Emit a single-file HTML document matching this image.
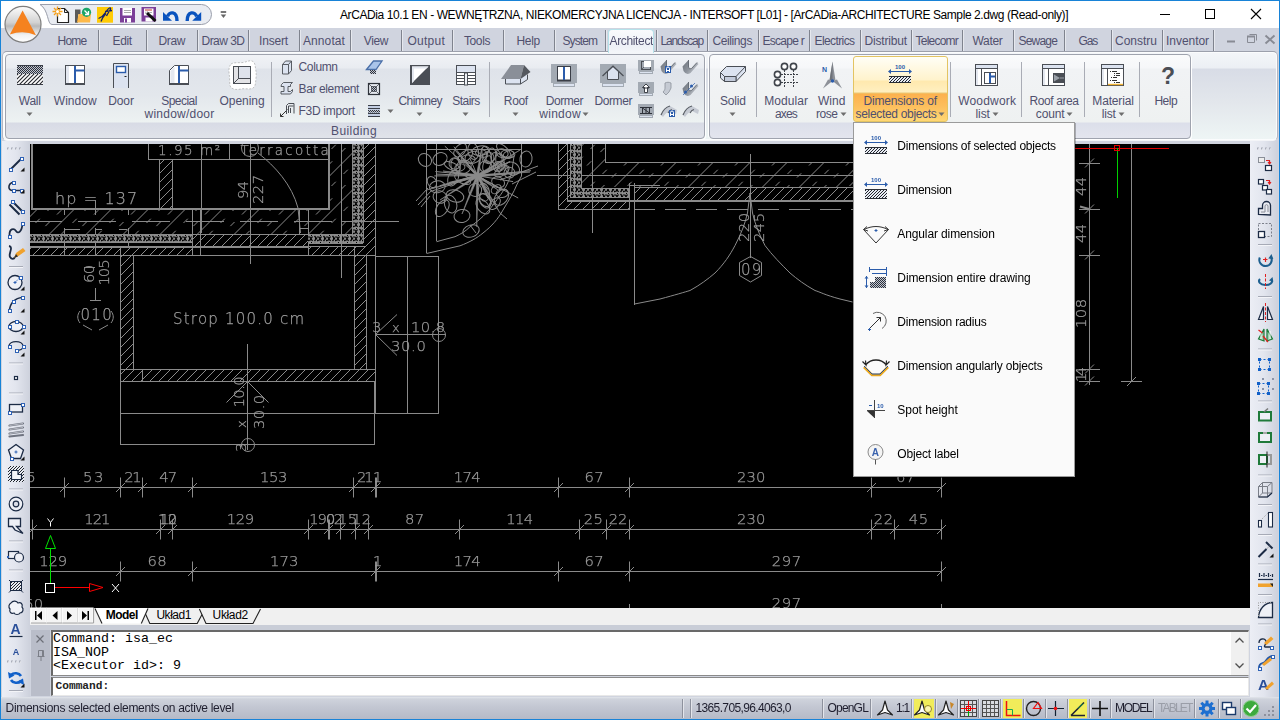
<!DOCTYPE html>
<html lang="en"><head><meta charset="utf-8"><title>ArCADia 10.1 EN</title>
<style>
html,body{margin:0;padding:0}
body{width:1280px;height:720px;overflow:hidden;position:relative;background:#d0d4df;font-family:"Liberation Sans",sans-serif;font-size:12px;color:#000}
.a{position:absolute}
.t{position:absolute;white-space:nowrap;line-height:1.2;font-family:"Liberation Sans",sans-serif}
svg{position:absolute;overflow:visible}
.sep{position:absolute;width:1px;background:#7f838e;box-shadow:1px 0 0 #e6e8ee}
</style></head>
<body>

<div class="a" style="left:0;top:0;width:1280px;height:28px;background:#fff"></div>
<div class="a" style="left:0;top:28px;width:1280px;height:24px;background:#d0d4df"></div>
<div class="a" style="left:0;top:0;width:1280px;height:720px;box-sizing:border-box;border:1px solid #1883d7;z-index:50;pointer-events:none"></div>
<svg style="left:0;top:0" width="240" height="52" viewBox="0 0 240 52"><defs><linearGradient id="ab" x1="0" y1="0" x2="0" y2="1"><stop offset="0" stop-color="#fdfdfd"/><stop offset=".45" stop-color="#d2d2d2"/><stop offset=".55" stop-color="#b9b9b9"/><stop offset=".8" stop-color="#f2f2f2"/><stop offset="1" stop-color="#ffffff"/></linearGradient></defs><path d="M40 4.500H201.500a10 10 0 0 1 0 20H52C47 24.500 49 10 40 4.500Z" fill="#e9ecf2" stroke="#9a9eab" stroke-width="1"/><circle cx="23" cy="24.300" r="18" fill="url(#ab)" stroke="#7d7d7d" stroke-width="1.200"/><path d="M22.600 10.500L36 35.200Q23 29.500 9.800 34.600Z" fill="#f5821f"/><path d="M57.500 8.500h7l4 4v10h-11z" fill="#fff" stroke="#222" stroke-width="1.200"/><path d="M64.500 8.500v4h4" fill="none" stroke="#222" stroke-width="1"/><g stroke="#f7a11a" stroke-width="1.300"><path d="M57.500 6.500v10M52.500 11.500h10M54 8l7 7M61 8l-7 7"/></g><circle cx="57.500" cy="11.500" r="1.500" fill="#fff"/><path d="M75 22.700v-13.200h5.500v5h-2.500v8.200z" fill="#5a5a5a"/><path d="M77 22.500l1.500-8.500h12.500l-1 8.500z" fill="#fdb94a"/><circle cx="86.500" cy="12.300" r="4.600" fill="#19a567"/><path d="M84.500 10.500l4 4M88.500 11v3.500h-3.500" stroke="#fff" stroke-width="1.300" fill="none"/><rect x="97" y="7" width="16" height="15.700" fill="#ffcb05"/><path d="M98.500 18.500c3-1 5-3 7-6s4-5 5-4.500s-2 4-4 8M101 21.500c1-3 3-6 5-8M105 11.500l7-1" fill="none" stroke="#15226b" stroke-width="1.300"/><path d="M120 8h15v14.500h-15z" fill="#7b3f98"/><rect x="122.500" y="8" width="9.500" height="7.500" fill="#fff"/><path d="M124 10.500h7M124 12.500h7" stroke="#aaa" stroke-width="1"/><rect x="124" y="18" width="7" height="4.500" fill="#fff"/><rect x="125" y="18.500" width="2" height="4" fill="#7b3f98"/><path d="M141.500 7h14.500v14.500h-14.500z" fill="#7b3f98"/><rect x="144" y="8.500" width="9.500" height="7" fill="#fff"/><path d="M145 10h7" stroke="#c0392b" stroke-width="1"/><path d="M145 12.500h7" stroke="#aaa" stroke-width="1"/><rect x="145.500" y="17.500" width="7" height="4" fill="#fff"/><path d="M146.500 12.500l9 8.500" stroke="#111" stroke-width="3"/><path d="M145 11l3 1l-2 2z" fill="#ddd"/><path d="M167.500 16.500C169 11.500 177 10.500 177 21" fill="none" stroke="#0a53be" stroke-width="3.400"/><path d="M163 12v8.800h9z" fill="#0a53be"/><path d="M196.700 16.500C195.200 11.500 187.200 10.500 187.200 21" fill="none" stroke="#0a53be" stroke-width="3.400"/><path d="M201.200 12v8.800h-9z" fill="#0a53be"/><path d="M220.700 12h5.500" stroke="#777" stroke-width="2"/><path d="M220.700 14.500h5.500l-2.750 3.500z" fill="#666"/></svg>
<span class="t" style="left:340.00px;top:8.00px;font-size:12px;letter-spacing:-0.410px;color:#000;">ArCADia 10.1 EN - WEWNĘTRZNA, NIEKOMERCYJNA LICENCJA - INTERSOFT [L01] - [ArCADia-ARCHITECTURE Sample 2.dwg (Read-only)]</span>
<svg style="left:1150px;top:0" width="130" height="28" viewBox="0 0 130 28"><g stroke="#000" stroke-width="1" fill="none" shape-rendering="crispEdges"><path d="M10 14.5H20"/><rect x="55.5" y="9.5" width="9" height="9"/></g><path d="M101 9L111 19M111 9L101 19" stroke="#000" stroke-width="1.1" fill="none"/></svg>
<div class="sep" style="left:98px;top:30px;height:21px"></div>
<div class="sep" style="left:146px;top:30px;height:21px"></div>
<div class="sep" style="left:197px;top:30px;height:21px"></div>
<div class="sep" style="left:248px;top:30px;height:21px"></div>
<div class="sep" style="left:299px;top:30px;height:21px"></div>
<div class="sep" style="left:350px;top:30px;height:21px"></div>
<div class="sep" style="left:401px;top:30px;height:21px"></div>
<div class="sep" style="left:452px;top:30px;height:21px"></div>
<div class="sep" style="left:503px;top:30px;height:21px"></div>
<div class="sep" style="left:554px;top:30px;height:21px"></div>
<div class="sep" style="left:605px;top:30px;height:21px"></div>
<div class="sep" style="left:656px;top:30px;height:21px"></div>
<div class="sep" style="left:707px;top:30px;height:21px"></div>
<div class="sep" style="left:758px;top:30px;height:21px"></div>
<div class="sep" style="left:809px;top:30px;height:21px"></div>
<div class="sep" style="left:860px;top:30px;height:21px"></div>
<div class="sep" style="left:911px;top:30px;height:21px"></div>
<div class="sep" style="left:962px;top:30px;height:21px"></div>
<div class="sep" style="left:1013px;top:30px;height:21px"></div>
<div class="sep" style="left:1064px;top:30px;height:21px"></div>
<div class="sep" style="left:1111px;top:30px;height:21px"></div>
<div class="sep" style="left:1162px;top:30px;height:21px"></div>
<div class="sep" style="left:1213px;top:30px;height:21px"></div>
<div class="a" style="left:608px;top:29px;width:46px;height:24px;background:linear-gradient(#f9fafd,#edf0f6 70%,#f4f6f9);border:1px solid #b5e2ea;border-bottom:none;border-radius:4px 4px 0 0;box-sizing:border-box;overflow:hidden;z-index:5"><span class="t" style="left:0.500px;top:3.900px;color:#50506e;font-size:12px;letter-spacing:-0.35px">Architect</span></div>
<span class="t" style="left:57.50px;top:33.50px;font-size:12px;letter-spacing:-0.752px;color:#50506e;">Home</span>
<span class="t" style="left:112.50px;top:33.50px;font-size:12px;letter-spacing:-0.357px;color:#50506e;">Edit</span>
<span class="t" style="left:158.50px;top:33.50px;font-size:12px;letter-spacing:-0.375px;color:#50506e;">Draw</span>
<span class="t" style="left:201.50px;top:33.50px;font-size:12px;letter-spacing:-0.525px;color:#50506e;">Draw 3D</span>
<span class="t" style="left:259.00px;top:33.50px;font-size:12px;letter-spacing:-0.168px;color:#50506e;">Insert</span>
<span class="t" style="left:303.00px;top:33.50px;font-size:12px;letter-spacing:0.091px;color:#50506e;">Annotat</span>
<span class="t" style="left:363.75px;top:33.50px;font-size:12px;letter-spacing:-0.386px;color:#50506e;">View</span>
<span class="t" style="left:407.50px;top:33.50px;font-size:12px;letter-spacing:0.247px;color:#50506e;">Output</span>
<span class="t" style="left:464.00px;top:33.50px;font-size:12px;letter-spacing:-0.402px;color:#50506e;">Tools</span>
<span class="t" style="left:516.50px;top:33.50px;font-size:12px;letter-spacing:-0.295px;color:#50506e;">Help</span>
<span class="t" style="left:562.50px;top:33.50px;font-size:12px;letter-spacing:-0.918px;color:#50506e;">System</span>
<span class="t" style="left:660.50px;top:33.50px;font-size:12px;letter-spacing:-1.192px;color:#50506e;">Landscap</span>
<span class="t" style="left:712.50px;top:33.50px;font-size:12px;letter-spacing:-0.398px;color:#50506e;">Ceilings</span>
<span class="t" style="left:762.50px;top:33.50px;font-size:12px;letter-spacing:-0.732px;color:#50506e;">Escape r</span>
<span class="t" style="left:814.50px;top:33.50px;font-size:12px;letter-spacing:-0.593px;color:#50506e;">Electrics</span>
<span class="t" style="left:864.50px;top:33.50px;font-size:12px;letter-spacing:-0.168px;color:#50506e;">Distribut</span>
<span class="t" style="left:915.50px;top:33.50px;font-size:12px;letter-spacing:-0.772px;color:#50506e;">Telecomr</span>
<span class="t" style="left:972.50px;top:33.50px;font-size:12px;letter-spacing:-0.312px;color:#50506e;">Water</span>
<span class="t" style="left:1018.50px;top:33.50px;font-size:12px;letter-spacing:-0.811px;color:#50506e;">Sewage</span>
<span class="t" style="left:1078.50px;top:33.50px;font-size:12px;letter-spacing:-1.169px;color:#50506e;">Gas</span>
<span class="t" style="left:1115.00px;top:33.50px;font-size:12px;letter-spacing:-0.002px;color:#50506e;">Constru</span>
<span class="t" style="left:1166.00px;top:33.50px;font-size:12px;letter-spacing:-0.044px;color:#50506e;">Inventor</span>
<svg style="left:1220px;top:30px" width="58" height="20" viewBox="0 0 58 20"><g fill="none" stroke="#888b94"><path d="M7 11.5H15" stroke-width="2"/><path d="M27.500 6.500h7v6h-7zM29.500 4.500h7v6" stroke-width="1"/><path d="M27 6.500h8" stroke-width="2"/><path d="M45.500 5.500L54.500 13.500M54.500 5.500L45.500 13.500" stroke-width="2"/></g></svg>
<div class="a" style="left:2px;top:51px;width:1276px;height:90px;box-sizing:border-box;border:1px solid #b4b8c3;border-top-color:#9ca0ac;border-bottom-color:#f4f5f8;background:linear-gradient(#f4f6f9 0,#eceff4 16px,#d8dce6 17px,#e3e7ec 51px,#eef5f5 87px);border-radius:5px;box-shadow:inset 0 0 0 1px #fbfcfd"></div>
<div class="a" style="left:5px;top:54px;width:700px;height:85px;box-sizing:border-box;border:1px solid #9fa3ae;border-radius:4px;background:linear-gradient(#f0f2f6 0,#e9ecf1 13px,#dfe3ea 14px,#e3e7ec 40px,#edf2f2 67px,#d8dbe5 68px,#e0e3ea 83px);box-shadow:1px 1px 0 #fff,-1px 0 0 #fff"></div>
<div class="a" style="left:709px;top:54px;width:482px;height:85px;box-sizing:border-box;border:1px solid #9fa3ae;border-radius:4px;background:linear-gradient(#fafbfc 0,#f6f7f9 13px,#f1f3f5 14px,#f0f2f3 40px,#eef1f1 67px,#dcdfea 68px,#e3e5ee 83px);box-shadow:1px 1px 0 #fff,-1px 0 0 #fff"></div>
<div class="a" style="left:853px;top:56px;width:95px;height:66px;box-sizing:border-box;border:1px solid #e3c462;border-radius:3px;background:linear-gradient(#fffef6 0,#fff3cc 23px,#ffe9ae 24px,#ffefc0 35px,#e9c978 36px,#fcb14e 37px,#fdc05e 50px,#ffd774 64px)"></div>
<div class="a" style="left:271px;top:62px;width:1px;height:55px;background:#a9acb5"></div>
<div class="a" style="left:489px;top:62px;width:1px;height:55px;background:#a9acb5"></div>
<div class="a" style="left:756px;top:62px;width:1px;height:55px;background:#a9acb5"></div>
<div class="a" style="left:950px;top:62px;width:1px;height:55px;background:#a9acb5"></div>
<div class="a" style="left:1021px;top:62px;width:1px;height:55px;background:#a9acb5"></div>
<div class="a" style="left:1084px;top:62px;width:1px;height:55px;background:#a9acb5"></div>
<div class="a" style="left:1139px;top:62px;width:1px;height:55px;background:#a9acb5"></div>
<span class="t" style="left:18.75px;top:93.60px;font-size:12px;letter-spacing:-0.222px;color:#50506e;">Wall</span>
<span class="t" style="left:53.75px;top:93.60px;font-size:12px;letter-spacing:0.054px;color:#50506e;">Window</span>
<span class="t" style="left:108.25px;top:93.60px;font-size:12px;letter-spacing:-0.127px;color:#50506e;">Door</span>
<span class="t" style="left:161.25px;top:93.60px;font-size:12px;letter-spacing:-0.551px;color:#50506e;">Special</span>
<span class="t" style="left:144.50px;top:106.60px;font-size:12px;letter-spacing:0.239px;color:#50506e;">window/door</span>
<span class="t" style="left:219.50px;top:93.60px;font-size:12px;letter-spacing:-0.052px;color:#50506e;">Opening</span>
<span class="t" style="left:298.60px;top:59.60px;font-size:12px;letter-spacing:-0.391px;color:#50506e;">Column</span>
<span class="t" style="left:298.60px;top:81.60px;font-size:12px;letter-spacing:-0.390px;color:#50506e;">Bar element</span>
<span class="t" style="left:298.60px;top:103.60px;font-size:12px;letter-spacing:-0.314px;color:#50506e;">F3D import</span>
<span class="t" style="left:398.40px;top:93.60px;font-size:12px;letter-spacing:-0.535px;color:#50506e;">Chimney</span>
<span class="t" style="left:452.30px;top:93.60px;font-size:12px;letter-spacing:-0.546px;color:#50506e;">Stairs</span>
<span class="t" style="left:503.80px;top:93.60px;font-size:12px;letter-spacing:-0.337px;color:#50506e;">Roof</span>
<span class="t" style="left:545.80px;top:93.60px;font-size:12px;letter-spacing:-0.467px;color:#50506e;">Dormer</span>
<span class="t" style="left:539.30px;top:106.60px;font-size:12px;letter-spacing:0.264px;color:#50506e;">window</span>
<span class="t" style="left:594.50px;top:93.60px;font-size:12px;letter-spacing:-0.417px;color:#50506e;">Dormer</span>
<span class="t" style="left:720.00px;top:93.60px;font-size:12px;letter-spacing:-0.177px;color:#50506e;">Solid</span>
<span class="t" style="left:764.20px;top:93.60px;font-size:12px;letter-spacing:0.064px;color:#50506e;">Modular</span>
<span class="t" style="left:775.00px;top:106.60px;font-size:12px;letter-spacing:-0.887px;color:#50506e;">axes</span>
<span class="t" style="left:818.00px;top:93.60px;font-size:12px;letter-spacing:0.040px;color:#50506e;">Wind</span>
<span class="t" style="left:816.00px;top:106.60px;font-size:12px;letter-spacing:-0.460px;color:#50506e;">rose</span>
<span class="t" style="left:863.60px;top:93.60px;font-size:12px;letter-spacing:-0.218px;color:#50506e;">Dimensions of</span>
<span class="t" style="left:855.60px;top:106.60px;font-size:12px;letter-spacing:-0.322px;color:#50506e;">selected objects</span>
<span class="t" style="left:958.20px;top:93.60px;font-size:12px;letter-spacing:0.192px;color:#50506e;">Woodwork</span>
<span class="t" style="left:975.50px;top:106.60px;font-size:12px;letter-spacing:-0.092px;color:#50506e;">list</span>
<span class="t" style="left:1029.50px;top:93.60px;font-size:12px;letter-spacing:-0.399px;color:#50506e;">Roof area</span>
<span class="t" style="left:1035.80px;top:106.60px;font-size:12px;letter-spacing:-0.111px;color:#50506e;">count</span>
<span class="t" style="left:1092.30px;top:93.60px;font-size:12px;letter-spacing:-0.160px;color:#50506e;">Material</span>
<span class="t" style="left:1101.70px;top:106.60px;font-size:12px;letter-spacing:-0.167px;color:#50506e;">list</span>
<span class="t" style="left:1154.40px;top:93.60px;font-size:12px;letter-spacing:-0.445px;color:#50506e;">Help</span>
<span class="t" style="left:331.00px;top:123.60px;font-size:12px;letter-spacing:0.413px;color:#50506e;">Building</span>
<svg style="left:0;top:0" width="1280" height="145" viewBox="0 0 1280 145">
<defs>
<pattern id="chk" width="2" height="2" patternUnits="userSpaceOnUse"><rect width="2" height="2" fill="#bfc4cf"/><rect width="1" height="1" fill="#2e323c"/><rect x="1" y="1" width="1" height="1" fill="#2e323c"/></pattern>
<pattern id="hat" width="4" height="4" patternUnits="userSpaceOnUse"><rect width="4" height="4" fill="#fff"/><path d="M-1 5L5 -1M-1 1L1 -1M3 5L5 3" stroke="#23262c" stroke-width="1.1"/></pattern>
<pattern id="hat3" width="3" height="3" patternUnits="userSpaceOnUse"><rect width="3" height="3" fill="#e8ecf4"/><path d="M-1 4L4 -1M-1 1L1 -1M2 4L4 2" stroke="#23262c" stroke-width="1"/></pattern>
<linearGradient id="gut" x1="0" y1="0" x2="1" y2="0.6"><stop offset="0" stop-color="#6b717a"/><stop offset=".55" stop-color="#8d939c"/><stop offset="1" stop-color="#c3c7ce"/></linearGradient>
</defs>
<rect x="17" y="65" width="26" height="9" fill="url(#chk)"/><rect x="17" y="74" width="26" height="11" fill="url(#hat)"/><path d="M17 65.500h26M17 84.500h26" stroke="#3a3e47" stroke-width="1"/>
<path d="M26.5 112.5h6l-3 3.5z" fill="#6e6e6e"/>
<rect x="65.500" y="65.500" width="19" height="19" fill="#fff" stroke="#4a4e55"/><rect x="66" y="66" width="3" height="17" fill="#e4e8f0"/><path d="M65 84h20" stroke="#4a4e55" stroke-width="2"/><path d="M75 66v17M75 70.500h9.500" stroke="#2b5cab" stroke-width="2" fill="none"/>
<path d="M113.500 88V63.500h15V88" fill="#dce3f0" stroke="#4a4e55"/><rect x="116.500" y="66.500" width="9" height="6" fill="#fff" stroke="#2b5cab" stroke-width="1.4"/><path d="M124.500 76.500h2" stroke="#222" stroke-width="1"/>
<path d="M169.500 84.500V70.500L174.500 65.500H188.500V84.500Z" fill="#fff" stroke="#4a4e55"/><path d="M170.500 83V71l4-4.500v16.500z" fill="#e4e8f0"/><path d="M169 84h20" stroke="#4a4e55" stroke-width="2"/><path d="M179 66v17M179 70.500h9.500" stroke="#2b5cab" stroke-width="2" fill="none"/>
<path d="M231 64c3-2 8-1 12-1.500c4-.5 6-2.500 9-1.500s3 4 3.500 7s1 6 .5 10s0 8-3 10s-8 0-12 1s-8 .5-10-1.500s-1-7-1.500-11s-1.500-9 1.500-12.500z" fill="#fff" stroke="#aaa" stroke-width=".7" stroke-dasharray="2 1.500"/><rect x="233.500" y="66.500" width="17" height="17" fill="#e3e3e6" stroke="#4a4e55"/><rect x="238.500" y="66.500" width="12" height="12" fill="#dfe3ec" stroke="#4a4e55"/><path d="M233.500 83.500l5-5" stroke="#4a4e55"/>
<path d="M282.500 64.500l3-3.500h6v9.500l-3 3.500h-6z" fill="#dce3f0" stroke="#4a4e55" stroke-width=".9"/><path d="M282.500 64.500h6v9.500M288.500 64.500l3-3.500" fill="none" stroke="#4a4e55" stroke-width=".9"/>
<path d="M281.500 84.500l2-2h9l-2 2v2h-2.500v5h2.500l2-2v2l-2 2.500h-9.500v-2.500h3v-5h-3z" fill="#dce3f0" stroke="#4a4e55" stroke-width=".9"/>
<path d="M280.500 116.500l7-7M280.500 116.500v-3M280.500 116.500h3" stroke="#333" stroke-width="1" fill="none"/><path d="M286.500 114v-8.500l2-2h5.500v10M288.500 113v-7h5M290.500 113v-5" stroke="#4a4e55" stroke-width="1" fill="none"/>
<path d="M366.500 69.500l7-8.500h8.500l-6 8.500z" fill="#a9c4ea" stroke="#4a6fa8" stroke-width="1.300"/><rect x="370" y="70" width="6" height="4" fill="url(#chk)"/>
<rect x="368.500" y="83.500" width="11" height="11" fill="#e6e9f0" stroke="#2e323a" stroke-width="1.200"/><rect x="371.500" y="86.500" width="5" height="5" fill="url(#chk)" stroke="#2e323a" stroke-width=".6"/><path d="M368.500 83.500l3 3M379.500 83.500l-3 3M368.500 94.500l3-3M379.500 94.500l-3-3" stroke="#2e323a" stroke-width=".7"/>
<rect x="368" y="105" width="12" height="12" fill="#c3cee2"/><path d="M368 105.500h12M368 108.500h12M368 113.500h12M368 116.500h12" stroke="#3a3e47" stroke-width="1"/><rect x="368" y="110" width="12" height="2.500" fill="url(#chk)"/>
<path d="M387.5 109.5h6l-3 3.5z" fill="#6e6e6e"/>
<rect x="410.500" y="65.500" width="19" height="19" fill="#4a4e55" stroke="#4a4e55"/><path d="M412 66.500h16.500L412 83z" fill="#fff"/><path d="M412 66.500v16.500l2-2v-12.500h12.500l2-2z" fill="#e4e8f0"/>
<path d="M416.5 112.5h6l-3 3.5z" fill="#6e6e6e"/>
<rect x="456.500" y="65.500" width="19" height="19" fill="#fff" stroke="#4a4e55"/><rect x="457" y="66" width="18" height="6" fill="#dce3f0"/><path d="M456.500 72.500h19M457 75.500h18M457 78.500h18M457 81.500h18" stroke="#4a4e55" stroke-width="1"/><rect x="464.500" y="73" width="3" height="12" fill="#eef1f6" stroke="#4a4e55" stroke-width="1"/>
<path d="M462.5 112.5h6l-3 3.5z" fill="#6e6e6e"/>
<path d="M505.500 79v5h15l7-4.500v-5" fill="#dce3f0" stroke="#4a4e55" stroke-width="1"/><path d="M501 79l10-14h13l-3.500 14z" fill="#8a8f98"/><path d="M524 65l6.500 7l-10 7z" fill="#54585f"/><path d="M520.500 79v5" stroke="#4a4e55"/>
<path d="M512.5 112.5h6l-3 3.5z" fill="#6e6e6e"/>
<rect x="551" y="64" width="26" height="19" fill="#a3aab3"/><rect x="553.500" y="83.500" width="21" height="3" fill="#dce3f0" stroke="#a3aab3"/><rect x="557.500" y="66.500" width="13" height="14" fill="#fff" stroke="#3a3e47" stroke-width="1"/><path d="M557 80.500h14" stroke="#3a3e47" stroke-width="2"/><path d="M564 67v13" stroke="#2b5cab" stroke-width="2"/>
<path d="M582.5 112.5h6l-3 3.5z" fill="#6e6e6e"/>
<rect x="600" y="64" width="26" height="19" fill="#a3aab3"/><rect x="602.500" y="83.500" width="21" height="3" fill="#dce3f0" stroke="#a3aab3"/><path d="M607.500 79.500v-8l5.500-5l5.500 5v8z" fill="#dce3f0" stroke="#4a4e55"/><path d="M602.500 76l10.500-10l10.500 10" fill="none" stroke="#4a4e55" stroke-width="1.200"/>
<rect x="638" y="60" width="16" height="11" fill="#a3aab3"/><rect x="639.500" y="71.500" width="13" height="2" fill="#dce3f0" stroke="#a3aab3"/>
<rect x="638" y="82" width="16" height="11" fill="#a3aab3"/><rect x="639.500" y="93.500" width="13" height="2" fill="#dce3f0" stroke="#a3aab3"/>
<rect x="638" y="104" width="16" height="11" fill="#a3aab3"/><rect x="639.500" y="115.500" width="13" height="2" fill="#dce3f0" stroke="#a3aab3"/>
<rect x="641.500" y="61.500" width="9" height="8" fill="none" stroke="#4a4e55"/><rect x="644" y="61" width="7" height="6" fill="#fff"/><path d="M641.500 69.500l2.500-2.500" stroke="#4a4e55" stroke-width=".8"/>
<path d="M644.500 92.500v-5h-2l3.500-3.500l3.500 3.500h-2v5z" fill="#fff" stroke="#2e323a" stroke-width=".9"/><path d="M643 88h6" stroke="#2e323a"/>
<path d="M640 107.500h12M640 113.500h12M642.500 107.500v6M649.500 107.500v6M642.500 108l7 5M646 108v5" stroke="#2e323a" stroke-width="1" fill="none"/>
<path d="M660.5 66.5L666.5 60V67Q667 70 669.5 68.5L675 62.5L676.5 64L668.5 73Q664 75.5 661.5 71Z" fill="url(#gut)"/><path d="M666.5 60V67Q667 70 669.5 68.5L675 62.5" fill="none" stroke="#5f656e" stroke-width=".9"/>
<rect x="665" y="66" width="6" height="7" fill="#2b5cab"/><path d="M666.5 72v-3.500a1.500 1.500 0 0 1 3 0v3.500M666.5 70.5h3" stroke="#fff" stroke-width="1" fill="none"/>
<path d="M682.5 66.5L688.5 60V67Q689 70 691.5 68.5L697 62.5L698.5 64L690.5 73Q686 75.5 683.5 71Z" fill="url(#gut)"/><path d="M688.5 60V67Q689 70 691.5 68.5L697 62.5" fill="none" stroke="#5f656e" stroke-width=".9"/>
<path d="M682.5 88.5L688.5 82V89Q689 92 691.5 90.5L697 84.5L698.5 86L690.5 95Q686 97.5 683.5 93Z" fill="url(#gut)"/><path d="M688.5 82V89Q689 92 691.5 90.5L697 84.5" fill="none" stroke="#5f656e" stroke-width=".9"/>
<path d="M683 95l12-12" stroke="#2b5cab" stroke-width=".7"/><circle cx="685.500" cy="92" r="1.500" fill="#2b5cab"/><circle cx="691.500" cy="86" r="1.500" fill="#2b5cab"/>
<path d="M665 83c2-1 4-1 6 0v5l-2 4l-3 3l-3-3c2-2 2-3 2-5z" fill="#c5cad3" stroke="#8a9099" stroke-width=".8"/>
<path d="M661 115c2-5 5-8 9-9l7 4l-1 4l-6-3c-3 1-5 3-7 6z" fill="#c5cad3"/><path d="M661 115c2-5 5-8 9-9M668 113c1-2 2-3 4-3.500" fill="none" stroke="#555a62" stroke-width="1.200"/>
<rect x="669" y="110" width="6" height="7" fill="#2b5cab"/><path d="M670.5 116v-3.500a1.500 1.500 0 0 1 3 0v3.500M670.5 114.5h3" stroke="#fff" stroke-width="1" fill="none"/>
<path d="M683 115c2-5 5-8 9-9l7 4l-1 4l-6-3c-3 1-5 3-7 6z" fill="#c5cad3"/><path d="M683 115c2-5 5-8 9-9M690 113c1-2 2-3 4-3.500" fill="none" stroke="#555a62" stroke-width="1.200"/>
<path d="M720.500 72.500l6-6h19v5l-9 9.500h-12.500l-3.500-3z" fill="#dce3f0" stroke="#4a4e55" stroke-width="1"/><path d="M720.500 72.500l4 4h11.500l9.500-10M724.500 76.500v5M736 76.500v5" fill="none" stroke="#4a4e55" stroke-width="1"/><path d="M724.500 76.500h11.500v5h-11.500z" fill="#c3cbdb" stroke="#4a4e55"/>
<path d="M729.5 112.5h6l-3 3.5z" fill="#6e6e6e"/>
<g fill="#fff" stroke="#3f434a" stroke-width="1.600"><path d="M781 74.500h18M781 82.500h18M784.500 70v17M793.500 70v17" stroke-dasharray="2 1" stroke-width="1" fill="none"/><circle cx="784.500" cy="66.500" r="3.100"/><circle cx="793.500" cy="66.500" r="3.100"/><circle cx="777.500" cy="74.500" r="3.100"/><circle cx="777.500" cy="82.500" r="3.100"/></g>
<path d="M832.500 61.500l3 19h-6z" fill="#8d9198"/><path d="M832.500 61.500v19h-3z" fill="#6f737a"/><path d="M832.500 81l-9.500 7.500l5-9z" fill="#8d9198"/><path d="M832.500 81l9.500 7.500l-5-9z" fill="#8d9198"/><circle cx="832.500" cy="81" r="1.700" fill="#2b5cab"/>
<text x="822" y="71.500" font-family="Liberation Sans,sans-serif" font-size="7" font-weight="bold" fill="#2b5cab">N</text>
<path d="M840.5 112.5h6l-3 3.5z" fill="#6e6e6e"/>
<g><path d="M889 71.5h22" stroke="#2b5cab" stroke-width="1"/><path d="M888 71.5l3-2.500v5zM912 71.5l-3-2.500v5z" fill="#2b5cab"/><text x="895" y="69" font-family="Liberation Sans,sans-serif" font-size="6" font-weight="bold" fill="#2b5cab">100</text><rect x="889" y="76" width="22" height="6" fill="url(#hat3)"/><path d="M889 76.5h22M889 82.5h22" stroke="#2a2e36" stroke-width="1"/></g>
<path d="M938.5 112.5h6l-3 3.5z" fill="#6e6e6e"/>
<rect x="975.500" y="64.500" width="22" height="21" fill="#fff" stroke="#4a4e55"/><rect x="976" y="65" width="21" height="3" fill="#dce3f0"/><path d="M975 68.500h23M981.500 69v16" stroke="#4a4e55" stroke-width="1" fill="none"/><rect x="976" y="69" width="2" height="16" fill="#e4e8f0"/>
<rect x="984.500" y="72.500" width="11" height="11" fill="#fff" stroke="#4a4e55"/><path d="M990 73v10M990 76.500h5" stroke="#2b5cab" stroke-width="2" fill="none"/>
<path d="M992.5 112.5h6l-3 3.5z" fill="#6e6e6e"/>
<rect x="1042.500" y="64.500" width="22" height="21" fill="#fff" stroke="#4a4e55"/><rect x="1043" y="65" width="21" height="3" fill="#dce3f0"/><path d="M1042 68.500h23M1048.500 69v16" stroke="#4a4e55" stroke-width="1" fill="none"/><rect x="1043" y="69" width="2" height="16" fill="#e4e8f0"/>
<rect x="1053" y="73" width="11" height="10" fill="#4a4e55"/><path d="M1054 74.500v7l6-3.500z" fill="#9aa0a8"/><path d="M1060 78h4" stroke="#9aa0a8"/>
<path d="M1066.5 112.5h6l-3 3.5z" fill="#6e6e6e"/>
<rect x="1101.500" y="64.500" width="22" height="21" fill="#fff" stroke="#4a4e55"/><rect x="1102" y="65" width="21" height="3" fill="#dce3f0"/><path d="M1101 68.500h23M1107.500 69v16" stroke="#4a4e55" stroke-width="1" fill="none"/><rect x="1102" y="69" width="2" height="16" fill="#e4e8f0"/>
<path d="M1110 71.500h1M1112 71.500h5M1114 73.500h1M1116 73.500h4M1114 75.500h1M1116 75.500h4M1111 77.500h1M1113 77.500h4M1110 80.500h1M1112 80.500h5M1114 82.500h1M1116 82.500h4" stroke="#333" stroke-width="1"/><path d="M1108 84.500h15" stroke="#f1b434" stroke-width="1.400"/>
<path d="M1118.5 112.5h6l-3 3.5z" fill="#6e6e6e"/>
<text x="1161" y="83.500" font-family="Liberation Sans,sans-serif" font-size="23" font-weight="bold" fill="#4b4e55">?</text>
</svg>
<div class="a" style="left:30px;top:144px;width:1220px;height:464px;background:#000"></div>
<svg style="left:0;top:0;will-change:transform" width="1280" height="720" viewBox="0 0 1280 720" font-family="DejaVu Sans, sans-serif" font-weight="200">
<defs><clipPath id="dc"><rect x="30" y="144" width="1220" height="464"/></clipPath>
<pattern id="h9" width="9" height="9" patternUnits="userSpaceOnUse"><path d="M-1 10L10 -1M-1 1L1 -1M8 10L10 8" stroke="#8a8a8a" stroke-width="1"/></pattern>
<pattern id="h7" width="7" height="7" patternUnits="userSpaceOnUse"><path d="M-1 8L8 -1M-1 1L1 -1M6 8L8 6" stroke="#8a8a8a" stroke-width="1"/></pattern>
<pattern id="h26" width="37" height="37" patternUnits="userSpaceOnUse" patternTransform="translate(24.500 0)"><path d="M-1 38L38 -1" stroke="#8a8a8a" stroke-width="1"/><path d="M-1 13L13 -1M11 38L38 11" stroke="#8a8a8a" stroke-width="1" stroke-dasharray="6 11"/><path d="M-1 26L26 -1M24 38L38 24" stroke="#8a8a8a" stroke-width="1" stroke-dasharray="6 13" stroke-dashoffset="7"/></pattern>
<pattern id="ins" width="9" height="7" patternUnits="userSpaceOnUse" patternTransform="translate(30 235)"><rect width="9" height="7" fill="#8e8e8e"/><path d="M.500 1.500L3.500 6M3.500 1.500L.500 6M5.500 1L7.500 3.500L5.500 6M8.500 1.500v1M8 5.500h1" stroke="#000" stroke-width="1.300" fill="none"/><rect x="2" y="0" width="1" height="1" fill="#000"/><rect x="6" y="3" width="1" height="1" fill="#000"/></pattern>
</defs>
<g clip-path="url(#dc)" fill="none">
<rect x="31" y="144" width="2" height="65" fill="#8a8a8a"/>
<rect x="31" y="208" width="299" height="2" fill="#8a8a8a"/>
<rect x="328" y="144" width="2" height="65" fill="#8a8a8a"/>
<rect x="148" y="144" width="1" height="16" fill="#8a8a8a"/>
<rect x="201" y="144" width="1" height="89" fill="#8a8a8a"/>
<rect x="229" y="144" width="1" height="16" fill="#8a8a8a"/>
<rect x="148" y="159" width="181" height="1" fill="#8a8a8a"/>
<text x="158" y="155" font-size="13.5" textLength="62.2" lengthAdjust="spacing" fill="#9c9c9c" stroke="#9c9c9c" stroke-width=".25" text-anchor="start">1.95 m²</text>
<text x="240.5" y="155" font-size="13.5" textLength="88.2" lengthAdjust="spacing" fill="#9c9c9c" stroke="#9c9c9c" stroke-width=".25" text-anchor="start">Terracotta</text>
<circle cx="250" cy="148" r="8.500" stroke="#8a8a8a"/>
<text x="55" y="203.5" font-size="16" textLength="82.2" lengthAdjust="spacing" fill="#9c9c9c" stroke="#9c9c9c" stroke-width=".25" text-anchor="start">hp = 137</text>
<rect x="95" y="200" width="1" height="12" fill="#8a8a8a"/>
<rect x="159" y="160" width="14" height="48" fill="url(#h9)"/>
<rect x="159" y="160" width="1" height="48" fill="#8a8a8a"/>
<rect x="172" y="160" width="1" height="48" fill="#8a8a8a"/>
<rect x="250" y="144" width="1" height="120" fill="#8a8a8a"/>
<text x="248" y="199" font-size="14.8" textLength="18.2" lengthAdjust="spacing" transform="rotate(-90 248 199)" fill="#9c9c9c" stroke="#9c9c9c" stroke-width=".25" text-anchor="start">94</text>
<text x="263" y="204" font-size="14.8" textLength="29.2" lengthAdjust="spacing" transform="rotate(-90 263 204)" fill="#9c9c9c" stroke="#9c9c9c" stroke-width=".25" text-anchor="start">227</text>
<path d="M258 153C275 166 292 185 298 208L300.500 233" stroke="#8a8a8a" stroke-width="1" />
<rect x="30" y="210" width="300" height="24" fill="url(#h26)"/>
<path d="M30 221.500H342" stroke="#8a8a8a" stroke-width="1" stroke-dasharray="38 16" stroke-dashoffset="6"/>
<path d="M64 229.500H80M95 229.500H102M119 229.500H127" stroke="#8a8a8a" stroke-width="1" />
<rect x="30" y="234" width="163" height="1" fill="#8a8a8a"/>
<rect x="30" y="235" width="163" height="7" fill="url(#ins)"/>
<rect x="30" y="242" width="163" height="1" fill="#8a8a8a"/>
<rect x="30" y="246" width="278" height="2" fill="#8a8a8a"/>
<rect x="30" y="247" width="163" height="8" fill="url(#h9)"/>
<rect x="30" y="255" width="346" height="1" fill="#8a8a8a"/>
<rect x="193" y="235" width="115" height="11" fill="url(#h9)"/>
<rect x="193" y="234" width="115" height="1" fill="#8a8a8a"/>
<rect x="192" y="209" width="1" height="47" fill="#8a8a8a"/>
<rect x="200" y="209" width="1" height="47" fill="#8a8a8a"/>
<rect x="64" y="209" width="1" height="6" fill="#8a8a8a"/>
<rect x="64" y="228" width="1" height="6" fill="#8a8a8a"/>
<rect x="64" y="243" width="1" height="4" fill="#8a8a8a"/>
<rect x="95" y="209" width="1" height="6" fill="#8a8a8a"/>
<rect x="95" y="228" width="1" height="6" fill="#8a8a8a"/>
<rect x="95" y="243" width="1" height="4" fill="#8a8a8a"/>
<rect x="128" y="209" width="1" height="6" fill="#8a8a8a"/>
<rect x="128" y="228" width="1" height="6" fill="#8a8a8a"/>
<rect x="128" y="243" width="1" height="4" fill="#8a8a8a"/>
<rect x="64" y="247" width="1" height="9" fill="#8a8a8a"/>
<rect x="95" y="247" width="1" height="9" fill="#8a8a8a"/>
<rect x="299" y="209" width="1" height="26" fill="#8a8a8a"/>
<rect x="308" y="209" width="1" height="47" fill="#8a8a8a"/>
<rect x="299" y="228" width="9" height="1" fill="#8a8a8a"/>
<rect x="308" y="235" width="55" height="8" fill="url(#ins)"/>
<rect x="308" y="234" width="46" height="1" fill="#8a8a8a"/>
<rect x="308" y="243" width="55" height="1" fill="#8a8a8a"/>
<rect x="308" y="247" width="58" height="8" fill="url(#h9)"/>
<rect x="308" y="246" width="58" height="1" fill="#8a8a8a"/>
<rect x="330" y="144" width="23" height="90" fill="url(#h26)"/>
<rect x="353" y="144" width="10" height="92" fill="url(#ins)"/>
<rect x="352" y="144" width="1" height="91" fill="#8a8a8a"/>
<rect x="363" y="144" width="1" height="99" fill="#8a8a8a"/>
<rect x="364" y="144" width="11" height="111" fill="url(#h9)"/>
<rect x="375" y="144" width="1" height="112" fill="#8a8a8a"/>
<rect x="341" y="144" width="1" height="134" fill="#8a8a8a"/>
<rect x="354" y="256" width="12" height="126" fill="url(#h9)"/>
<rect x="354" y="247" width="1" height="123" fill="#8a8a8a"/>
<rect x="366" y="256" width="1" height="114" fill="#8a8a8a"/>
<rect x="342" y="221" width="57" height="1" fill="#8a8a8a"/>
<rect x="120" y="256" width="13" height="114" fill="url(#h9)"/>
<rect x="120" y="247" width="1" height="198" fill="#8a8a8a"/>
<rect x="133" y="256" width="1" height="114" fill="#8a8a8a"/>
<rect x="120" y="370" width="255" height="11" fill="url(#h9)"/>
<rect x="120" y="369" width="255" height="1" fill="#8a8a8a"/>
<rect x="120" y="381" width="255" height="1" fill="#8a8a8a"/>
<rect x="142" y="370" width="1" height="11" fill="#8a8a8a"/>
<rect x="120" y="413" width="319" height="1" fill="#8a8a8a"/>
<rect x="120" y="444" width="255" height="1" fill="#8a8a8a"/>
<rect x="374" y="381" width="1" height="64" fill="#8a8a8a"/>
<rect x="375" y="256" width="1" height="158" fill="#8a8a8a"/>
<rect x="407" y="256" width="1" height="158" fill="#8a8a8a"/>
<rect x="438" y="256" width="1" height="158" fill="#8a8a8a"/>
<rect x="375" y="256" width="64" height="1" fill="#8a8a8a"/>
<text x="173" y="324.3" font-size="15" textLength="131.2" lengthAdjust="spacing" fill="#9c9c9c" stroke="#9c9c9c" stroke-width=".25" text-anchor="start">Strop 100.0 cm</text>
<rect x="247" y="344" width="1" height="106" fill="#8a8a8a"/>
<path d="M226.500 402.500L247.500 381.500L268.500 402.500" stroke="#8a8a8a" stroke-width="1" />
<circle cx="248" cy="445" r="6.500" stroke="#8a8a8a"/>
<text x="243.5" y="407.5" font-size="14.8" textLength="31.2" lengthAdjust="spacing" transform="rotate(-90 243.5 407.5)" fill="#9c9c9c" stroke="#9c9c9c" stroke-width=".25" text-anchor="start">10.0</text>
<text x="263.5" y="429" font-size="14.8" textLength="34.2" lengthAdjust="spacing" transform="rotate(-90 263.5 429)" fill="#9c9c9c" stroke="#9c9c9c" stroke-width=".25" text-anchor="start">30.0</text>
<text x="246" y="428" font-size="13" transform="rotate(-90 246 428)" fill="#9c9c9c" stroke="#9c9c9c" stroke-width=".25" text-anchor="start">x</text>
<text x="246" y="452" font-size="14.8" transform="rotate(-90 246 452)" fill="#9c9c9c" stroke="#9c9c9c" stroke-width=".25" text-anchor="start">3</text>
<text x="93.5" y="283" font-size="14.8" textLength="18.2" lengthAdjust="spacing" transform="rotate(-90 93.5 283)" fill="#9c9c9c" stroke="#9c9c9c" stroke-width=".25" text-anchor="start">60</text>
<text x="109" y="285.5" font-size="14.8" textLength="26.2" lengthAdjust="spacing" transform="rotate(-90 109 285.5)" fill="#9c9c9c" stroke="#9c9c9c" stroke-width=".25" text-anchor="start">105</text>
<rect x="95" y="288" width="1" height="13" fill="#8a8a8a"/>
<rect x="90" y="300" width="11" height="1" fill="#8a8a8a"/>
<rect x="84" y="267" width="11" height="1" fill="#8a8a8a"/>
<text x="80.5" y="320" font-size="15" textLength="31.2" lengthAdjust="spacing" fill="#9c9c9c" stroke="#9c9c9c" stroke-width=".25" text-anchor="start">010</text>
<path d="M80 311C77 315 77 319 80 323M111 311C114 315 114 319 111 323M83 325L92 330M108 325L99 330" stroke="#8a8a8a" stroke-width="1" />
<text x="372" y="331.6" font-size="14.8" fill="#9c9c9c" stroke="#9c9c9c" stroke-width=".25" text-anchor="start">3</text>
<text x="392" y="331.6" font-size="13" fill="#9c9c9c" stroke="#9c9c9c" stroke-width=".25" text-anchor="start">x</text>
<text x="411" y="331.6" font-size="14.8" textLength="34.2" lengthAdjust="spacing" fill="#9c9c9c" stroke="#9c9c9c" stroke-width=".25" text-anchor="start">10.8</text>
<text x="391" y="350.8" font-size="14.8" textLength="34.9" lengthAdjust="spacing" fill="#9c9c9c" stroke="#9c9c9c" stroke-width=".25" text-anchor="start">30.0</text>
<rect x="375" y="334" width="71" height="1" fill="#8a8a8a"/>
<path d="M397 314.500L375.500 334.500L397 355.500" stroke="#8a8a8a" stroke-width="1" />
<circle cx="439" cy="335" r="6.500" stroke="#8a8a8a"/>
<rect x="426" y="144" width="1" height="109" fill="#8a8a8a"/>
<rect x="436" y="144" width="1" height="97" fill="#8a8a8a"/>
<path d="M426.500 253.500L460 245.800C470 242 477 238 483 233C492 226 498 219 503 210C509 200 514 192 516.700 185L521.500 176" stroke="#8a8a8a" stroke-width="1" />
<path d="M436.500 241.700L455 236.700C461 234 466 231 470 226.700C480 220 487 213 493 205C499 197 503 192 506.700 185C509 180 511 176 511.700 173L514 156" stroke="#8a8a8a" stroke-width="1" />
<rect x="426" y="149" width="96" height="1" fill="#8a8a8a"/>
<rect x="521" y="144" width="1" height="32" fill="#8a8a8a"/>
<path d="M478.7 176.0L481.7 148.0L476.3 175.6Z" fill="#8a8a8a" stroke="#8a8a8a" stroke-width=".6"/><path d="M477.7 174.6L443.0 171.0L477.3 177.0Z" fill="#8a8a8a" stroke="#8a8a8a" stroke-width=".6"/><path d="M478.0 176.9L510.0 161.7L477.0 174.7Z" fill="#8a8a8a" stroke="#8a8a8a" stroke-width=".6"/><path d="M476.5 176.4L500.0 213.0L478.5 175.2Z" fill="#8a8a8a" stroke="#8a8a8a" stroke-width=".6"/><path d="M476.3 175.8L476.7 226.7L478.7 175.8Z" fill="#8a8a8a" stroke="#8a8a8a" stroke-width=".6"/><path d="M477.2 174.6L426.7 190.0L477.8 177.0Z" fill="#8a8a8a" stroke="#8a8a8a" stroke-width=".6"/><path d="M478.4 175.0L455.0 150.0L476.6 176.6Z" fill="#8a8a8a" stroke="#8a8a8a" stroke-width=".6"/><path d="M478.1 176.8L520.0 150.0L476.9 174.8Z" fill="#8a8a8a" stroke="#8a8a8a" stroke-width=".6"/><path d="M476.8 174.8L440.0 200.0L478.2 176.8Z" fill="#8a8a8a" stroke="#8a8a8a" stroke-width=".6"/><path d="M476.4 175.3L462.0 214.0L478.6 176.3Z" fill="#8a8a8a" stroke="#8a8a8a" stroke-width=".6"/><path d="M477.6 177.0L530.0 172.0L477.4 174.6Z" fill="#8a8a8a" stroke="#8a8a8a" stroke-width=".6"/><path d="M476.8 176.8L498.0 190.0L478.2 174.8Z" fill="#8a8a8a" stroke="#8a8a8a" stroke-width=".6"/><path d="M477.5 175.8L439.7 185.7 M477.5 175.8L509.8 161.7 M477.5 175.8L437.0 174.1 M477.5 175.8L492.6 205.4 M477.5 175.8L444.8 146.2 M477.5 175.8L502.9 190.3 M477.5 175.8L518.2 198.0 M477.5 175.8L470.0 158.7 M477.5 175.8L530.9 170.7 M477.5 175.8L453.9 146.7 M477.5 175.8L488.8 190.4 M477.5 175.8L455.8 172.5 M477.5 175.8L487.9 198.3 M477.5 175.8L513.1 181.6 M477.5 175.8L431.4 191.2 M477.5 175.8L435.4 171.5 M477.5 175.8L434.3 175.9 M477.5 175.8L448.8 182.5" stroke="#8a8a8a" stroke-width="1" /><path d="M416 201L428 188M418 205L432 190M421 207L430 196M538 166L500 180M536 172L512 184M500 213L507 219M470 225L476 233" stroke="#8a8a8a" stroke-width="1" /><ellipse cx="502.2" cy="153.2" rx="6.0" ry="4.4" transform="rotate(13 502.2 153.2)" stroke="#8a8a8a" stroke-width="1"/><ellipse cx="480.8" cy="150.6" rx="8.8" ry="4.7" transform="rotate(172 480.8 150.6)" stroke="#8a8a8a" stroke-width="1"/><ellipse cx="485.7" cy="166.6" rx="5.9" ry="6.2" transform="rotate(85 485.7 166.6)" stroke="#8a8a8a" stroke-width="1"/><ellipse cx="509.4" cy="172.7" rx="5.3" ry="5.4" transform="rotate(140 509.4 172.7)" stroke="#8a8a8a" stroke-width="1"/><ellipse cx="475.2" cy="190.0" rx="6.5" ry="6.4" transform="rotate(136 475.2 190.0)" stroke="#8a8a8a" stroke-width="1"/><ellipse cx="496.2" cy="189.2" rx="5.5" ry="3.7" transform="rotate(143 496.2 189.2)" stroke="#8a8a8a" stroke-width="1"/><ellipse cx="494.8" cy="203.6" rx="7.0" ry="4.1" transform="rotate(132 494.8 203.6)" stroke="#8a8a8a" stroke-width="1"/><ellipse cx="502.2" cy="193.2" rx="6.0" ry="4.3" transform="rotate(175 502.2 193.2)" stroke="#8a8a8a" stroke-width="1"/><ellipse cx="486.7" cy="155.1" rx="9.0" ry="4.1" transform="rotate(71 486.7 155.1)" stroke="#8a8a8a" stroke-width="1"/><ellipse cx="503.8" cy="151.0" rx="9.5" ry="4.1" transform="rotate(46 503.8 151.0)" stroke="#8a8a8a" stroke-width="1"/><ellipse cx="481.6" cy="153.3" rx="6.3" ry="3.7" transform="rotate(16 481.6 153.3)" stroke="#8a8a8a" stroke-width="1"/><ellipse cx="455.6" cy="166.0" rx="7.7" ry="4.6" transform="rotate(82 455.6 166.0)" stroke="#8a8a8a" stroke-width="1"/><ellipse cx="512.3" cy="168.6" rx="7.6" ry="6.1" transform="rotate(33 512.3 168.6)" stroke="#8a8a8a" stroke-width="1"/><ellipse cx="488.0" cy="157.6" rx="5.9" ry="5.7" transform="rotate(169 488.0 157.6)" stroke="#8a8a8a" stroke-width="1"/><ellipse cx="508.0" cy="153.9" rx="6.9" ry="3.8" transform="rotate(7 508.0 153.9)" stroke="#8a8a8a" stroke-width="1"/><ellipse cx="501.8" cy="171.2" rx="8.2" ry="4.3" transform="rotate(148 501.8 171.2)" stroke="#8a8a8a" stroke-width="1"/><ellipse cx="454.9" cy="163.5" rx="5.8" ry="5.7" transform="rotate(12 454.9 163.5)" stroke="#8a8a8a" stroke-width="1"/><ellipse cx="482.8" cy="206.4" rx="8.8" ry="5.3" transform="rotate(50 482.8 206.4)" stroke="#8a8a8a" stroke-width="1"/><ellipse cx="497.8" cy="166.7" rx="5.1" ry="4.3" transform="rotate(80 497.8 166.7)" stroke="#8a8a8a" stroke-width="1"/><ellipse cx="498.1" cy="182.3" rx="6.7" ry="5.2" transform="rotate(24 498.1 182.3)" stroke="#8a8a8a" stroke-width="1"/><ellipse cx="442.3" cy="208.2" rx="9.4" ry="5.5" transform="rotate(124 442.3 208.2)" stroke="#8a8a8a" stroke-width="1"/><ellipse cx="459.8" cy="167.6" rx="5.2" ry="3.6" transform="rotate(164 459.8 167.6)" stroke="#8a8a8a" stroke-width="1"/><ellipse cx="460.1" cy="150.2" rx="7.9" ry="4.9" transform="rotate(131 460.1 150.2)" stroke="#8a8a8a" stroke-width="1"/><ellipse cx="473.0" cy="157.4" rx="8.2" ry="5.9" transform="rotate(165 473.0 157.4)" stroke="#8a8a8a" stroke-width="1"/><ellipse cx="450.6" cy="204.1" rx="9.1" ry="6.1" transform="rotate(75 450.6 204.1)" stroke="#8a8a8a" stroke-width="1"/><ellipse cx="490.9" cy="155.7" rx="7.8" ry="4.6" transform="rotate(105 490.9 155.7)" stroke="#8a8a8a" stroke-width="1"/><ellipse cx="463.6" cy="166.9" rx="7.9" ry="6.5" transform="rotate(158 463.6 166.9)" stroke="#8a8a8a" stroke-width="1"/><ellipse cx="473.2" cy="151.2" rx="8.3" ry="5.2" transform="rotate(79 473.2 151.2)" stroke="#8a8a8a" stroke-width="1"/><ellipse cx="487.0" cy="163.8" rx="8.4" ry="3.6" transform="rotate(108 487.0 163.8)" stroke="#8a8a8a" stroke-width="1"/><ellipse cx="453.1" cy="178.1" rx="8.1" ry="5.0" transform="rotate(111 453.1 178.1)" stroke="#8a8a8a" stroke-width="1"/><ellipse cx="500.1" cy="166.1" rx="5.1" ry="4.4" transform="rotate(122 500.1 166.1)" stroke="#8a8a8a" stroke-width="1"/><ellipse cx="483.9" cy="192.2" rx="9.1" ry="5.5" transform="rotate(80 483.9 192.2)" stroke="#8a8a8a" stroke-width="1"/><ellipse cx="500.0" cy="161.5" rx="8.0" ry="4.1" transform="rotate(78 500.0 161.5)" stroke="#8a8a8a" stroke-width="1"/><ellipse cx="496.6" cy="158.8" rx="6.7" ry="5.2" transform="rotate(57 496.6 158.8)" stroke="#8a8a8a" stroke-width="1"/><ellipse cx="501.5" cy="197.4" rx="8.8" ry="6.0" transform="rotate(128 501.5 197.4)" stroke="#8a8a8a" stroke-width="1"/><ellipse cx="502.9" cy="169.3" rx="5.8" ry="4.9" transform="rotate(50 502.9 169.3)" stroke="#8a8a8a" stroke-width="1"/><ellipse cx="484.9" cy="200.9" rx="7.8" ry="5.0" transform="rotate(57 484.9 200.9)" stroke="#8a8a8a" stroke-width="1"/><ellipse cx="508.5" cy="154.5" rx="5.3" ry="3.6" transform="rotate(157 508.5 154.5)" stroke="#8a8a8a" stroke-width="1"/><ellipse cx="452.1" cy="166.3" rx="8.6" ry="3.6" transform="rotate(24 452.1 166.3)" stroke="#8a8a8a" stroke-width="1"/><ellipse cx="462.7" cy="179.2" rx="8.7" ry="4.2" transform="rotate(25 462.7 179.2)" stroke="#8a8a8a" stroke-width="1"/><ellipse cx="437.3" cy="186.8" rx="7.9" ry="5.9" transform="rotate(173 437.3 186.8)" stroke="#8a8a8a" stroke-width="1"/><ellipse cx="468.2" cy="159.1" rx="7.1" ry="4.0" transform="rotate(2 468.2 159.1)" stroke="#8a8a8a" stroke-width="1"/><ellipse cx="431.9" cy="182.1" rx="5.8" ry="4.3" transform="rotate(62 431.9 182.1)" stroke="#8a8a8a" stroke-width="1"/><ellipse cx="465.3" cy="156.1" rx="8.4" ry="4.7" transform="rotate(143 465.3 156.1)" stroke="#8a8a8a" stroke-width="1"/><ellipse cx="462" cy="216" rx="8" ry="6.5" transform="rotate(-10 462 216)" stroke="#8a8a8a" stroke-width="1"/><ellipse cx="471" cy="231" rx="8.5" ry="6" transform="rotate(-20 471 231)" stroke="#8a8a8a" stroke-width="1"/><ellipse cx="440" cy="197" rx="7" ry="6" transform="rotate(20 440 197)" stroke="#8a8a8a" stroke-width="1"/><ellipse cx="425" cy="160" rx="7" ry="6" transform="rotate(40 425 160)" stroke="#8a8a8a" stroke-width="1"/><ellipse cx="440" cy="159" rx="7.5" ry="6" transform="rotate(-30 440 159)" stroke="#8a8a8a" stroke-width="1"/><ellipse cx="526" cy="159" rx="6" ry="8" transform="rotate(10 526 159)" stroke="#8a8a8a" stroke-width="1"/><ellipse cx="455" cy="196" rx="9" ry="6" transform="rotate(15 455 196)" stroke="#8a8a8a" stroke-width="1"/><ellipse cx="485" cy="200" rx="7" ry="5" transform="rotate(60 485 200)" stroke="#8a8a8a" stroke-width="1"/>
<rect x="537" y="175" width="317" height="1" fill="#8a8a8a"/>
<rect x="558" y="144" width="13" height="66" fill="url(#h9)"/>
<rect x="558" y="144" width="1" height="66" fill="#8a8a8a"/>
<rect x="567" y="144" width="1" height="57" fill="#8a8a8a"/>
<rect x="571" y="144" width="10" height="53" fill="url(#ins)"/>
<rect x="570" y="144" width="1" height="53" fill="#8a8a8a"/>
<rect x="581" y="144" width="1" height="45" fill="#8a8a8a"/>
<rect x="581" y="189" width="48" height="8" fill="url(#ins)"/>
<rect x="581" y="188" width="49" height="1" fill="#8a8a8a"/>
<rect x="570" y="197" width="60" height="1" fill="#8a8a8a"/>
<rect x="558" y="201" width="72" height="8" fill="url(#h9)"/>
<rect x="567" y="200" width="503" height="2" fill="#8a8a8a"/>
<rect x="558" y="209" width="72" height="1" fill="#8a8a8a"/>
<rect x="592" y="144" width="1" height="89" fill="#8a8a8a"/>
<rect x="605" y="144" width="1" height="19" fill="#8a8a8a"/>
<rect x="629" y="183" width="1" height="27" fill="#8a8a8a"/>
<rect x="581" y="144" width="24" height="44" fill="url(#h26)"/>
<rect x="605" y="162" width="465" height="1" fill="#8a8a8a"/>
<rect x="634" y="187" width="436" height="1" fill="#8a8a8a"/>
<rect x="630" y="185" width="30" height="1" fill="#8a8a8a"/>
<rect x="605" y="163" width="465" height="24" fill="url(#h26)"/>
<rect x="634" y="188" width="436" height="12" fill="url(#h9)"/>
<rect x="634" y="183" width="1" height="122" fill="#8a8a8a"/>
<path d="M634 209.500H1070" stroke="#8a8a8a" stroke-width="1" stroke-dasharray="21 10"/>
<rect x="750" y="154" width="1" height="104" fill="#8a8a8a"/>
<path d="M634.500 304L660 299C675 295 685 292 690 290.500C700 285 708 279 715 273C724 264 730 255 735 245.500C741 234 745 224 747.500 213L750 193" stroke="#8a8a8a" stroke-width="1" />
<path d="M852.500 302L840 299C825 295 820 292 815 290.500C805 285 797 279 790 273C781 264 772 255 765 245.500C759 234 755 224 752.500 213L750 193" stroke="#8a8a8a" stroke-width="1" />
<path d="M750.500 256.500L761.500 262.500V275.500L750.500 282L739.500 275.500V262.500Z" stroke="#8a8a8a" stroke-width="1" />
<text x="741" y="274.5" font-size="15" textLength="20.2" lengthAdjust="spacing" fill="#9c9c9c" stroke="#9c9c9c" stroke-width=".25" text-anchor="start">09</text>
<text x="748.5" y="242" font-size="14.8" textLength="29.2" lengthAdjust="spacing" transform="rotate(-90 748.5 242)" fill="#9c9c9c" stroke="#9c9c9c" stroke-width=".25" text-anchor="start">220</text>
<text x="763.5" y="242" font-size="14.8" textLength="29.2" lengthAdjust="spacing" transform="rotate(-90 763.5 242)" fill="#9c9c9c" stroke="#9c9c9c" stroke-width=".25" text-anchor="start">245</text>
<rect x="30" y="487" width="912" height="1" fill="#8a8a8a"/>
<rect x="64" y="477.5" width="1" height="20.0" fill="#8a8a8a"/><path d="M60 492.0L69 483.0" stroke="#8a8a8a" stroke-width="1"/>
<rect x="120" y="477.5" width="1" height="20.0" fill="#8a8a8a"/><path d="M116 492.0L125 483.0" stroke="#8a8a8a" stroke-width="1"/>
<rect x="142" y="477.5" width="1" height="20.0" fill="#8a8a8a"/><path d="M138 492.0L147 483.0" stroke="#8a8a8a" stroke-width="1"/>
<rect x="192" y="477.5" width="1" height="20.0" fill="#8a8a8a"/><path d="M188 492.0L197 483.0" stroke="#8a8a8a" stroke-width="1"/>
<rect x="353" y="477.5" width="1" height="20.0" fill="#8a8a8a"/><path d="M349 492.0L358 483.0" stroke="#8a8a8a" stroke-width="1"/>
<rect x="558" y="477.5" width="1" height="20.0" fill="#8a8a8a"/><path d="M554 492.0L563 483.0" stroke="#8a8a8a" stroke-width="1"/>
<rect x="629" y="477.5" width="1" height="20.0" fill="#8a8a8a"/><path d="M625 492.0L634 483.0" stroke="#8a8a8a" stroke-width="1"/>
<rect x="871" y="477.5" width="1" height="20.0" fill="#8a8a8a"/><path d="M867 492.0L876 483.0" stroke="#8a8a8a" stroke-width="1"/>
<rect x="941" y="477.5" width="1" height="20.0" fill="#8a8a8a"/><path d="M937 492.0L946 483.0" stroke="#8a8a8a" stroke-width="1"/>
<rect x="375" y="477.5" width="2" height="20.0" fill="#8a8a8a"/><path d="M371 492.0L380 483.0" stroke="#8a8a8a" stroke-width="1"/>
<text x="83" y="482" font-size="14.8" textLength="20.5" lengthAdjust="spacing" fill="#9c9c9c" stroke="#9c9c9c" stroke-width=".25" text-anchor="start">53</text>
<text x="124.3" y="482" font-size="14.8" textLength="17.4" lengthAdjust="spacing" fill="#9c9c9c" stroke="#9c9c9c" stroke-width=".25" text-anchor="start">21</text>
<text x="159.3" y="482" font-size="14.8" textLength="17.9" lengthAdjust="spacing" fill="#9c9c9c" stroke="#9c9c9c" stroke-width=".25" text-anchor="start">47</text>
<text x="260" y="482" font-size="14.8" textLength="27.5" lengthAdjust="spacing" fill="#9c9c9c" stroke="#9c9c9c" stroke-width=".25" text-anchor="start">153</text>
<text x="357" y="482" font-size="14.8" textLength="16.7" lengthAdjust="spacing" fill="#9c9c9c" stroke="#9c9c9c" stroke-width=".25" text-anchor="start">21</text>
<text x="453.8" y="482" font-size="14.8" textLength="26.9" lengthAdjust="spacing" fill="#9c9c9c" stroke="#9c9c9c" stroke-width=".25" text-anchor="start">174</text>
<text x="584.5" y="482" font-size="14.8" textLength="19.2" lengthAdjust="spacing" fill="#9c9c9c" stroke="#9c9c9c" stroke-width=".25" text-anchor="start">67</text>
<text x="737" y="482" font-size="14.8" textLength="28.5" lengthAdjust="spacing" fill="#9c9c9c" stroke="#9c9c9c" stroke-width=".25" text-anchor="start">230</text>
<text x="896" y="482" font-size="14.8" textLength="19.2" lengthAdjust="spacing" fill="#9c9c9c" stroke="#9c9c9c" stroke-width=".25" text-anchor="start">67</text>
<text x="26" y="482" font-size="14.8" fill="#9c9c9c" stroke="#9c9c9c" stroke-width=".25" text-anchor="start">6</text>
<text x="373" y="482" font-size="14.8" fill="#9c9c9c" stroke="#9c9c9c" stroke-width=".25" text-anchor="start">1</text>
<rect x="30" y="529" width="912" height="1" fill="#8a8a8a"/>
<rect x="32" y="519.5" width="1" height="20.0" fill="#8a8a8a"/><path d="M28 534.0L37 525.0" stroke="#8a8a8a" stroke-width="1"/>
<rect x="160" y="519.5" width="1" height="20.0" fill="#8a8a8a"/><path d="M156 534.0L165 525.0" stroke="#8a8a8a" stroke-width="1"/>
<rect x="172" y="519.5" width="1" height="20.0" fill="#8a8a8a"/><path d="M168 534.0L177 525.0" stroke="#8a8a8a" stroke-width="1"/>
<rect x="308" y="519.5" width="1" height="20.0" fill="#8a8a8a"/><path d="M304 534.0L313 525.0" stroke="#8a8a8a" stroke-width="1"/>
<rect x="340" y="519.5" width="1" height="20.0" fill="#8a8a8a"/><path d="M336 534.0L345 525.0" stroke="#8a8a8a" stroke-width="1"/>
<rect x="355" y="519.5" width="1" height="20.0" fill="#8a8a8a"/><path d="M351 534.0L360 525.0" stroke="#8a8a8a" stroke-width="1"/>
<rect x="368" y="519.5" width="1" height="20.0" fill="#8a8a8a"/><path d="M364 534.0L373 525.0" stroke="#8a8a8a" stroke-width="1"/>
<rect x="459" y="519.5" width="1" height="20.0" fill="#8a8a8a"/><path d="M455 534.0L464 525.0" stroke="#8a8a8a" stroke-width="1"/>
<rect x="579" y="519.5" width="1" height="20.0" fill="#8a8a8a"/><path d="M575 534.0L584 525.0" stroke="#8a8a8a" stroke-width="1"/>
<rect x="606" y="519.5" width="1" height="20.0" fill="#8a8a8a"/><path d="M602 534.0L611 525.0" stroke="#8a8a8a" stroke-width="1"/>
<rect x="629" y="519.5" width="1" height="20.0" fill="#8a8a8a"/><path d="M625 534.0L634 525.0" stroke="#8a8a8a" stroke-width="1"/>
<rect x="871" y="519.5" width="1" height="20.0" fill="#8a8a8a"/><path d="M867 534.0L876 525.0" stroke="#8a8a8a" stroke-width="1"/>
<rect x="894" y="519.5" width="1" height="20.0" fill="#8a8a8a"/><path d="M890 534.0L899 525.0" stroke="#8a8a8a" stroke-width="1"/>
<rect x="941" y="519.5" width="1" height="20.0" fill="#8a8a8a"/><path d="M937 534.0L946 525.0" stroke="#8a8a8a" stroke-width="1"/>
<rect x="328" y="519.5" width="2" height="20.0" fill="#8a8a8a"/><path d="M324 534.0L333 525.0" stroke="#8a8a8a" stroke-width="1"/>
<text x="84.3" y="524" font-size="14.8" textLength="26.2" lengthAdjust="spacing" fill="#9c9c9c" stroke="#9c9c9c" stroke-width=".25" text-anchor="start">121</text>
<text x="158" y="524" font-size="14.8" textLength="19.2" lengthAdjust="spacing" fill="#9c9c9c" stroke="#9c9c9c" stroke-width=".25" text-anchor="start">12</text>
<text x="226.8" y="524" font-size="14.8" textLength="27.4" lengthAdjust="spacing" fill="#9c9c9c" stroke="#9c9c9c" stroke-width=".25" text-anchor="start">129</text>
<text x="309.3" y="524" font-size="14.8" textLength="25.9" lengthAdjust="spacing" fill="#9c9c9c" stroke="#9c9c9c" stroke-width=".25" text-anchor="start">190</text>
<text x="338" y="524" font-size="14.8" textLength="19.2" lengthAdjust="spacing" fill="#9c9c9c" stroke="#9c9c9c" stroke-width=".25" text-anchor="start">15</text>
<text x="352" y="524" font-size="14.8" textLength="19.2" lengthAdjust="spacing" fill="#9c9c9c" stroke="#9c9c9c" stroke-width=".25" text-anchor="start">12</text>
<text x="405" y="524" font-size="14.8" textLength="19.2" lengthAdjust="spacing" fill="#9c9c9c" stroke="#9c9c9c" stroke-width=".25" text-anchor="start">87</text>
<text x="506.3" y="524" font-size="14.8" textLength="26.9" lengthAdjust="spacing" fill="#9c9c9c" stroke="#9c9c9c" stroke-width=".25" text-anchor="start">114</text>
<text x="583.8" y="524" font-size="14.8" textLength="19.2" lengthAdjust="spacing" fill="#9c9c9c" stroke="#9c9c9c" stroke-width=".25" text-anchor="start">25</text>
<text x="608.8" y="524" font-size="14.8" textLength="18.7" lengthAdjust="spacing" fill="#9c9c9c" stroke="#9c9c9c" stroke-width=".25" text-anchor="start">22</text>
<text x="737" y="524" font-size="14.8" textLength="28.5" lengthAdjust="spacing" fill="#9c9c9c" stroke="#9c9c9c" stroke-width=".25" text-anchor="start">230</text>
<text x="873.8" y="524" font-size="14.8" textLength="19.4" lengthAdjust="spacing" fill="#9c9c9c" stroke="#9c9c9c" stroke-width=".25" text-anchor="start">22</text>
<text x="908.8" y="524" font-size="14.8" textLength="19.4" lengthAdjust="spacing" fill="#9c9c9c" stroke="#9c9c9c" stroke-width=".25" text-anchor="start">45</text>
<text x="160" y="524" font-size="14.8" textLength="17.2" lengthAdjust="spacing" fill="#9c9c9c" stroke="#9c9c9c" stroke-width=".25" text-anchor="start">10</text>
<text x="326" y="524" font-size="14.8" textLength="17.2" lengthAdjust="spacing" fill="#9c9c9c" stroke="#9c9c9c" stroke-width=".25" text-anchor="start">02</text>
<rect x="30" y="571" width="912" height="1" fill="#8a8a8a"/>
<rect x="120" y="561.5" width="1" height="20.0" fill="#8a8a8a"/><path d="M116 576.0L125 567.0" stroke="#8a8a8a" stroke-width="1"/>
<rect x="192" y="561.5" width="1" height="20.0" fill="#8a8a8a"/><path d="M188 576.0L197 567.0" stroke="#8a8a8a" stroke-width="1"/>
<rect x="558" y="561.5" width="1" height="20.0" fill="#8a8a8a"/><path d="M554 576.0L563 567.0" stroke="#8a8a8a" stroke-width="1"/>
<rect x="629" y="561.5" width="1" height="20.0" fill="#8a8a8a"/><path d="M625 576.0L634 567.0" stroke="#8a8a8a" stroke-width="1"/>
<rect x="941" y="561.5" width="1" height="20.0" fill="#8a8a8a"/><path d="M937 576.0L946 567.0" stroke="#8a8a8a" stroke-width="1"/>
<rect x="375" y="561.5" width="2" height="20.0" fill="#8a8a8a"/><path d="M371 576.0L380 567.0" stroke="#8a8a8a" stroke-width="1"/>
<text x="39.3" y="566" font-size="14.8" textLength="27.9" lengthAdjust="spacing" fill="#9c9c9c" stroke="#9c9c9c" stroke-width=".25" text-anchor="start">129</text>
<text x="147.5" y="566" font-size="14.8" textLength="19.2" lengthAdjust="spacing" fill="#9c9c9c" stroke="#9c9c9c" stroke-width=".25" text-anchor="start">68</text>
<text x="270" y="566" font-size="14.8" textLength="28.5" lengthAdjust="spacing" fill="#9c9c9c" stroke="#9c9c9c" stroke-width=".25" text-anchor="start">173</text>
<text x="453.8" y="566" font-size="14.8" textLength="26.9" lengthAdjust="spacing" fill="#9c9c9c" stroke="#9c9c9c" stroke-width=".25" text-anchor="start">174</text>
<text x="584.5" y="566" font-size="14.8" textLength="19.2" lengthAdjust="spacing" fill="#9c9c9c" stroke="#9c9c9c" stroke-width=".25" text-anchor="start">67</text>
<text x="771.8" y="566" font-size="14.8" textLength="29.4" lengthAdjust="spacing" fill="#9c9c9c" stroke="#9c9c9c" stroke-width=".25" text-anchor="start">297</text>
<text x="373" y="566" font-size="14.8" fill="#9c9c9c" stroke="#9c9c9c" stroke-width=".25" text-anchor="start">1</text>
<text x="771.8" y="607.5" font-size="14.8" textLength="29.4" lengthAdjust="spacing" fill="#9c9c9c" stroke="#9c9c9c" stroke-width=".25" text-anchor="start">297</text>
<text x="24" y="609" font-size="14.8" textLength="19.2" lengthAdjust="spacing" fill="#9c9c9c" stroke="#9c9c9c" stroke-width=".25" text-anchor="start">60</text>
<rect x="629" y="604" width="1" height="4" fill="#8a8a8a"/>
<rect x="941" y="604" width="1" height="4" fill="#8a8a8a"/>
<rect x="45.500" y="583.500" width="9" height="9" stroke="#fff" stroke-width="1"/>
<rect x="50" y="549" width="1" height="34" fill="#00e000"/>
<path d="M50.500 535.500L45.500 548.500H55.500Z" stroke="#00e000" stroke-width="1"/>
<rect x="55" y="587" width="34" height="1" fill="#ff0000"/>
<path d="M103 587.500L89.500 583.500V591.500Z" stroke="#ff0000" stroke-width="1"/>
<path d="M47.500 518.500l3 4l3-4M50.500 522.500v4" stroke="#fff" stroke-width="1"/>
<path d="M112 584l7 8M119 584l-7 8" stroke="#fff" stroke-width="1"/>
<rect x="1089" y="144" width="1" height="241" fill="#8a8a8a"/>
<rect x="1131" y="144" width="1" height="238" fill="#8a8a8a"/>
<path d="M1079 163.500h21M1085 167.5L1094 158.5" stroke="#8a8a8a" stroke-width="1"/>
<path d="M1079 209.500h21M1085 213.5L1094 204.5" stroke="#8a8a8a" stroke-width="1"/>
<path d="M1079 255.500h21M1085 259.5L1094 250.5" stroke="#8a8a8a" stroke-width="1"/>
<path d="M1079 369.500h21M1085 373.5L1094 364.5" stroke="#8a8a8a" stroke-width="1"/>
<path d="M1079 381.500h21M1085 385.5L1094 376.5" stroke="#8a8a8a" stroke-width="1"/>
<path d="M1121 381.500h21M1127 386L1136 377" stroke="#8a8a8a" stroke-width="1"/>
<path d="M1080 206.500l9 2.500" stroke="#8a8a8a" stroke-width="2"/>
<text x="1086" y="196" font-size="14.8" textLength="19.2" lengthAdjust="spacing" transform="rotate(-90 1086 196)" fill="#9c9c9c" stroke="#9c9c9c" stroke-width=".25" text-anchor="start">44</text>
<text x="1086" y="243" font-size="14.8" textLength="19.2" lengthAdjust="spacing" transform="rotate(-90 1086 243)" fill="#9c9c9c" stroke="#9c9c9c" stroke-width=".25" text-anchor="start">44</text>
<text x="1086" y="328" font-size="14.8" textLength="29.2" lengthAdjust="spacing" transform="rotate(-90 1086 328)" fill="#9c9c9c" stroke="#9c9c9c" stroke-width=".25" text-anchor="start">108</text>
<text x="1086" y="382" font-size="14.8" textLength="15.2" lengthAdjust="spacing" transform="rotate(-90 1086 382)" fill="#9c9c9c" stroke="#9c9c9c" stroke-width=".25" text-anchor="start">14</text>
<rect x="1070" y="148" width="99" height="1" fill="#e00000"/>
<rect x="1117" y="148" width="1" height="50" fill="#00d000"/>
<rect x="1114.500" y="145.500" width="5" height="5" stroke="#e00000" stroke-width="1"/>
</g></svg>
<div class="a" style="left:2px;top:141px;width:28px;height:556px;background:linear-gradient(90deg,#eceef5,#e2e5ee 50%,#cdd1dc)"></div>
<div class="a" style="left:1250px;top:141px;width:28px;height:556px;background:linear-gradient(90deg,#eceef5,#e2e5ee 50%,#cdd1dc)"></div>
<svg style="left:0;top:0" width="32" height="700" viewBox="0 0 32 700"><rect x="7" y="147.5" width="2" height="2" fill="#a9adba"/><rect x="8" y="148.5" width="1" height="1" fill="#fff"/><rect x="11" y="147.5" width="2" height="2" fill="#a9adba"/><rect x="12" y="148.5" width="1" height="1" fill="#fff"/><rect x="15" y="147.5" width="2" height="2" fill="#a9adba"/><rect x="16" y="148.5" width="1" height="1" fill="#fff"/><rect x="19" y="147.5" width="2" height="2" fill="#a9adba"/><rect x="20" y="148.5" width="1" height="1" fill="#fff"/><path d="M10.500 169.500L21.500 158.500" stroke="#1c2b45" stroke-width="2"/><rect x="9.5" y="168.5" width="3" height="3" fill="#fff" stroke="#2f62b5" stroke-width="1"/><rect x="20.5" y="157.5" width="3" height="3" fill="#fff" stroke="#2f62b5" stroke-width="1"/><path d="M24.5 171.5v-4l-4 4z" fill="#111"/><path d="M13.500 182C7 184 8 191 13 190.500H21.500" fill="none" stroke="#1c2b45" stroke-width="1.600"/><rect x="12.5" y="181.5" width="3" height="3" fill="#fff" stroke="#2f62b5" stroke-width="1"/><rect x="12.5" y="189.5" width="3" height="3" fill="#fff" stroke="#2f62b5" stroke-width="1"/><rect x="20.5" y="189.5" width="3" height="3" fill="#fff" stroke="#2f62b5" stroke-width="1"/><path d="M24.5 193.5v-4l-4 4z" fill="#111"/><path d="M12.500 201.500L22.500 211.500M9.500 204.500L19.500 214.500" stroke="#1c2b45" stroke-width="2"/><rect x="11.5" y="200.5" width="3" height="3" fill="#fff" stroke="#2f62b5" stroke-width="1"/><rect x="21.5" y="210.5" width="3" height="3" fill="#fff" stroke="#2f62b5" stroke-width="1"/><path d="M9.500 236C9 228 14 228 16 231S22 232 22.500 223.500" fill="none" stroke="#1c2b45" stroke-width="1.800"/><rect x="8.5" y="235.5" width="3" height="3" fill="#fff" stroke="#2f62b5" stroke-width="1"/><rect x="21.5" y="222.5" width="3" height="3" fill="#fff" stroke="#2f62b5" stroke-width="1"/><path d="M9 246C14 247 8 254 10 257S14 259 15 257" fill="none" stroke="#1c2b45" stroke-width="1.800"/><path d="M14 258l2-5l7-5l2.500 3l-7 5z" fill="#f0a22e"/><path d="M14 258l2-4l2 2.500z" fill="#333"/><path d="M9 266.5h14" stroke="#a6aab6" stroke-width="1"/><path d="M9 267.5h14" stroke="#f3f4f8" stroke-width="1"/><circle cx="15" cy="282.500" r="7" fill="#eef0f6" stroke="#1c2b45" stroke-width="1.300"/><path d="M15 282.500l5-5" stroke="#2f62b5" stroke-width="1" stroke-dasharray="1.500 1"/><path d="M13.500 282.500h3M15 281v3" stroke="#2f62b5" stroke-width="1"/><rect x="19.5" y="276.5" width="3" height="3" fill="#fff" stroke="#2f62b5" stroke-width="1"/><path d="M24.5 290.5v-4l-4 4z" fill="#111"/><path d="M9.500 310.500C10 303 15 298 22.500 297.500" fill="none" stroke="#1c2b45" stroke-width="1.500"/><rect x="8.5" y="309.5" width="3" height="3" fill="#fff" stroke="#2f62b5" stroke-width="1"/><rect x="12.5" y="300.5" width="3" height="3" fill="#fff" stroke="#2f62b5" stroke-width="1"/><rect x="21.5" y="296.5" width="3" height="3" fill="#fff" stroke="#2f62b5" stroke-width="1"/><path d="M24.5 312.5v-4l-4 4z" fill="#111"/><ellipse cx="16" cy="326.500" rx="7" ry="5" fill="#eef0f6" stroke="#1c2b45" stroke-width="1.400"/><rect x="8.5" y="325.5" width="3" height="3" fill="#fff" stroke="#2f62b5" stroke-width="1"/><rect x="15.5" y="320.5" width="3" height="3" fill="#fff" stroke="#2f62b5" stroke-width="1"/><rect x="22.5" y="325.5" width="3" height="3" fill="#fff" stroke="#2f62b5" stroke-width="1"/><path d="M24.5 334.5v-4l-4 4z" fill="#111"/><path d="M9 346.500C9 340 23 340 23 346.500C23 349 20 350.500 16.500 350.500" fill="none" stroke="#1c2b45" stroke-width="1.400"/><rect x="8.5" y="345.5" width="3" height="3" fill="#fff" stroke="#2f62b5" stroke-width="1"/><rect x="22.5" y="345.5" width="3" height="3" fill="#fff" stroke="#2f62b5" stroke-width="1"/><rect x="15.5" y="349.5" width="3" height="3" fill="#fff" stroke="#2f62b5" stroke-width="1"/><path d="M24.5 356.5v-4l-4 4z" fill="#111"/><path d="M9 363h14" stroke="#a6aab6" stroke-width="1"/><path d="M9 364h14" stroke="#f3f4f8" stroke-width="1"/><rect x="14.500" y="376.500" width="3" height="3" fill="#fff" stroke="#1c2b45" stroke-width="1.200"/><path d="M9 393h14" stroke="#a6aab6" stroke-width="1"/><path d="M9 394h14" stroke="#f3f4f8" stroke-width="1"/><rect x="9.500" y="404.500" width="13" height="7.500" fill="#eef0f6" stroke="#1c2b45" stroke-width="1.300"/><rect x="21.5" y="403.5" width="3" height="3" fill="#fff" stroke="#2f62b5" stroke-width="1"/><rect x="8.5" y="411.5" width="3" height="3" fill="#fff" stroke="#2f62b5" stroke-width="1"/><g fill="none" stroke="#6f7480" stroke-width="2.200" stroke-linecap="round"><path d="M9.500 425.500L23 423.500M9.500 429.500L23 427.500M9.500 433.500L23 431.500M9.500 436.500L23 435"/></g><g fill="none" stroke="#c9ccd4" stroke-width=".8"><path d="M9.500 425.500L23 423.500M9.500 429.500L23 427.500M9.500 433.500L23 431.500"/></g><path d="M16 444.500l7.500 5.500l-3 8.500h-9l-3-8.500z" fill="#eef0f6" stroke="#1c2b45" stroke-width="1.300"/><path d="M14.500 452h3M16 450.500v3" stroke="#2f62b5" stroke-width="1"/><rect x="10.5" y="457.5" width="3" height="3" fill="#fff" stroke="#2f62b5" stroke-width="1"/><path d="M24.5 460.5v-4l-4 4z" fill="#111"/><rect x="8" y="466" width="16" height="16" fill="url(#hat3)"/><path d="M11.500 470.500h6.500v4h3.500v5h-10z" fill="#f4f5f9" stroke="#1c2b45" stroke-width="1.200"/><path d="M9 489h14" stroke="#a6aab6" stroke-width="1"/><path d="M9 490h14" stroke="#f3f4f8" stroke-width="1"/><circle cx="16" cy="504" r="6.800" fill="#eef0f6" stroke="#1c2b45" stroke-width="1.200"/><circle cx="16" cy="504" r="2.800" fill="#d9dce6" stroke="#1c2b45" stroke-width="1.200"/><path d="M8.500 518.500h12v8h-4l6.500 7l-8-3.500l-2.500-3.500h-4z" fill="#eef0f6" stroke="#1c2b45" stroke-width="1.300"/><path d="M9 541h14" stroke="#a6aab6" stroke-width="1"/><path d="M9 542h14" stroke="#f3f4f8" stroke-width="1"/><rect x="8.500" y="551.500" width="10" height="7" fill="#eef0f6" stroke="#1c2b45" stroke-width="1.200"/><circle cx="19" cy="557.500" r="4.500" fill="#eef0f6" stroke="#1c2b45" stroke-width="1.200"/><rect x="7" y="556" width="2" height="2" fill="#2f62b5"/><path d="M9 570h14" stroke="#a6aab6" stroke-width="1"/><path d="M9 571h14" stroke="#f3f4f8" stroke-width="1"/><rect x="10.500" y="581.500" width="11" height="9" fill="url(#hat3)" stroke="#1c2b45" stroke-width="1"/><path d="M9 580l2 2M23 580l-2 2M9 592.500l2-2M23 592.500l-2-2" stroke="#1c2b45" stroke-width="1"/><path d="M11 603c2-3 6-2 7 0c3-1 5 1 4 4c2 2 1 6-2 6c-1 2-5 2-6 0c-3 1-5-1-4-4c-2-2-1-5 1-6z" fill="#f1f3f8" stroke="#1c2b45" stroke-width="1.200"/><text x="10.500" y="634" font-family="Liberation Sans,sans-serif" font-size="14" font-weight="bold" fill="#2a4f9a">A</text><path d="M9.500 636.500h13" stroke="#1c2b45" stroke-width="1.200"/><text x="12.800" y="654.500" font-family="Liberation Sans,sans-serif" font-size="9" font-weight="bold" fill="#2a4f9a">A</text><rect x="7" y="660.5" width="2" height="2" fill="#a9adba"/><rect x="8" y="661.5" width="1" height="1" fill="#fff"/><rect x="11" y="660.5" width="2" height="2" fill="#a9adba"/><rect x="12" y="661.5" width="1" height="1" fill="#fff"/><rect x="15" y="660.5" width="2" height="2" fill="#a9adba"/><rect x="16" y="661.5" width="1" height="1" fill="#fff"/><rect x="19" y="660.5" width="2" height="2" fill="#a9adba"/><rect x="20" y="661.5" width="1" height="1" fill="#fff"/><g fill="none" stroke="#1160c9" stroke-width="2.600"><path d="M21 676a6 5 0 0 0 -10 -1"/><path d="M11 680a6 5 0 0 0 10 1"/></g><path d="M8 672l1 6.500l5.500-3z" fill="#1160c9"/><path d="M24 685l-1-6.500l-5.500 3z" fill="#1160c9"/><path d="M24.5 687.5v-4l-4 4z" fill="#111"/><path d="M9 690.5h14" stroke="#a6aab6" stroke-width="1"/><path d="M9 691.5h14" stroke="#f3f4f8" stroke-width="1"/></svg>
<svg style="left:1250px;top:0" width="30" height="700" viewBox="0 0 30 700"><rect x="7" y="147.5" width="2" height="2" fill="#a9adba"/><rect x="8" y="148.5" width="1" height="1" fill="#fff"/><rect x="11" y="147.5" width="2" height="2" fill="#a9adba"/><rect x="12" y="148.5" width="1" height="1" fill="#fff"/><rect x="15" y="147.5" width="2" height="2" fill="#a9adba"/><rect x="16" y="148.5" width="1" height="1" fill="#fff"/><rect x="19" y="147.5" width="2" height="2" fill="#a9adba"/><rect x="20" y="148.5" width="1" height="1" fill="#fff"/><rect x="8.500" y="157.500" width="6" height="5" fill="#eee" stroke="#8a8e98"/><rect x="15.500" y="165.500" width="6" height="5" fill="#fff" stroke="#1c2b45" stroke-width="1.200"/><path d="M16 160.500h3.500v3M18 162l1.500 2l1.500-2" stroke="#e02020" stroke-width="1.200" fill="none"/><rect x="8.500" y="179.500" width="5" height="4.500" fill="#fff" stroke="#1c2b45" stroke-width="1.200"/><rect x="12.500" y="185.500" width="5" height="4.500" fill="#fff" stroke="#1c2b45" stroke-width="1.200"/><rect x="16.500" y="189.500" width="5" height="4.500" fill="#fff" stroke="#1c2b45" stroke-width="1.200"/><path d="M16 180.500h3.500v3M18 182l1.500 2l1.500-2" stroke="#e02020" stroke-width="1.200" fill="none"/><path d="M8.500 214.500v-6h4v-3a4 4 0 0 1 8 0v9.500z" fill="#e9ebf2" stroke="#1c2b45" stroke-width="1.300"/><path d="M11 212h4v-6.500a2 2 0 0 1 3 0v6.500" fill="none" stroke="#8a8e98" stroke-width="1"/><rect x="8.500" y="223.500" width="13" height="13" fill="none" stroke="#7b7f8a" stroke-dasharray="2 1.500"/><rect x="8.500" y="231.500" width="6" height="6" fill="#fff" stroke="#1c2b45" stroke-width="1.300"/><path d="M8 244.5h14" stroke="#a6aab6" stroke-width="1"/><path d="M8 245.5h14" stroke="#f3f4f8" stroke-width="1"/><path d="M9.800 257.500A6.200 6.200 0 1 0 21 257" fill="none" stroke="#1d5f8f" stroke-width="2"/><path d="M18.300 258.500l3.200-4.500l1.800 5z" fill="#1d5f8f"/><path d="M13 259.500h4.500M15.500 257.500v4.500" stroke="#e02020" stroke-width="1.200"/><path d="M21.500 279.500A6.500 4 0 1 1 10 279" fill="none" stroke="#1d5f8f" stroke-width="2"/><path d="M19 280.500l3.500-3.500l.8 4.500z" fill="#1d5f8f"/><path d="M15.500 274v15" stroke="#e02020" stroke-width="1" stroke-dasharray="3 1.500"/><path d="M8 296.5h14" stroke="#a6aab6" stroke-width="1"/><path d="M8 297.5h14" stroke="#f3f4f8" stroke-width="1"/><path d="M13.500 306.500v13h-5zM17.500 306.500v13h5z" fill="#eef0f6" stroke="#1c2b45" stroke-width="1.200"/><path d="M15.500 303v19" stroke="#e02020" stroke-width="1" stroke-dasharray="3 1.500"/><path d="M14 329l-5.500 10l5.500 2zM17 329l5.500 10l-5.500 2z" fill="#9fd0b0" stroke="#1f7a3a" stroke-width="1.200"/><path d="M11 331v8M20 331v8" stroke="#fff" stroke-width="1"/><path d="M8.500 330l4 3M13 336l5 6" stroke="#e02020" stroke-width="1.300"/><path d="M8 349h14" stroke="#a6aab6" stroke-width="1"/><path d="M8 350h14" stroke="#f3f4f8" stroke-width="1"/><rect x="9.500" y="359.500" width="10" height="10" fill="none" stroke="#1160c9" stroke-dasharray="2 2"/><rect x="8" y="358" width="3" height="3" fill="#1160c9"/><rect x="18" y="358" width="3" height="3" fill="#1160c9"/><rect x="8" y="368" width="3" height="3" fill="#1160c9"/><rect x="18" y="368" width="3" height="3" fill="#1160c9"/><rect x="8.500" y="383.500" width="10" height="10" fill="none" stroke="#1160c9" stroke-dasharray="2 2"/><rect x="7" y="382" width="3" height="3" fill="#1160c9"/><rect x="17" y="382" width="3" height="3" fill="#1160c9"/><rect x="7" y="392" width="3" height="3" fill="#1160c9"/><rect x="17" y="392" width="3" height="3" fill="#1160c9"/><rect x="12" y="378" width="2" height="2" fill="#8a93a8"/><rect x="22" y="378" width="2" height="2" fill="#8a93a8"/><rect x="12" y="388" width="2" height="2" fill="#8a93a8"/><rect x="22" y="388" width="2" height="2" fill="#8a93a8"/><path d="M8 401h14" stroke="#a6aab6" stroke-width="1"/><path d="M8 402h14" stroke="#f3f4f8" stroke-width="1"/><rect x="9" y="412" width="12" height="8.500" fill="#eef0f6" stroke="#1f7a3a" stroke-width="2"/><path d="M14 412l4-3.500" stroke="#777" stroke-width="1.500"/><rect x="9" y="433" width="12" height="9" fill="#eef0f6" stroke="#1f7a3a" stroke-width="2"/><path d="M13 433h4" stroke="#aaa" stroke-width="2"/><rect x="9" y="455" width="8" height="9" fill="#eef0f6" stroke="#1f7a3a" stroke-width="2"/><path d="M17 455h4v9h-4" fill="none" stroke="#999" stroke-width="2"/><path d="M17 451.500v16" stroke="#222" stroke-width="1"/><path d="M8 475h14" stroke="#a6aab6" stroke-width="1"/><path d="M8 476h14" stroke="#f3f4f8" stroke-width="1"/><path d="M8.500 486.500h9v10.500h-9zM8.500 486.500l4-4h9.500l-4.500 4M22 482.500v10.500l-4.500 4M12.500 482.500v10.500h9.500M12.500 493l-4 4" fill="none" stroke="#7a7e88" stroke-width="1"/><path d="M8.500 497h9l4.500-4" fill="none" stroke="#1c2b45" stroke-width="1.200"/><path d="M8 504.5h14" stroke="#a6aab6" stroke-width="1"/><path d="M8 505.5h14" stroke="#f3f4f8" stroke-width="1"/><rect x="8.500" y="520.500" width="3" height="6.500" fill="#fff" stroke="#1c2b45" stroke-width="1.100"/><rect x="18.500" y="512.500" width="4" height="14.500" fill="#fff" stroke="#1c2b45" stroke-width="1.100"/><path d="M12 519l6-6" stroke="#999" stroke-width="1" stroke-dasharray="1 1.500"/><path d="M8 534.5h14" stroke="#a6aab6" stroke-width="1"/><path d="M8 535.5h14" stroke="#f3f4f8" stroke-width="1"/><path d="M8.500 557l8-8" stroke="#1c2b45" stroke-width="2"/><path d="M16 542l6.500 6.500" stroke="#1c2b45" stroke-width="2"/><path d="M16.500 549l4-4" stroke="#888" stroke-width="1" stroke-dasharray="1 1"/><path d="M23.5 557.5v-4l-4 4z" fill="#111"/><path d="M8 564h14" stroke="#a6aab6" stroke-width="1"/><path d="M8 565h14" stroke="#f3f4f8" stroke-width="1"/><path d="M8 579.500h15" stroke="#1c2b45" stroke-width="1.200"/><path d="M9.500 573v4M14 573v4M18.500 573v4M22.500 574v3" stroke="#1c2b45" stroke-width="1.200"/><path d="M11 575.500h1.500M15.500 575.500H17M20 575.500h1" stroke="#1c2b45" stroke-width="1"/><rect x="8" y="583.500" width="15" height="3.500" fill="#f0a22e"/><path d="M23 583.500v3.500l-3-3.500z" fill="#222"/><path d="M8 594.5h14" stroke="#a6aab6" stroke-width="1"/><path d="M8 595.5h14" stroke="#f3f4f8" stroke-width="1"/><path d="M8.500 617.500C9 609 15 602.500 22.500 602.500V617.500Z" fill="#eef0f6" stroke="#1c2b45" stroke-width="1.300"/><path d="M8.500 616v-13.500h13" fill="none" stroke="#999" stroke-width="1" stroke-dasharray="1 1.500"/><path d="M8 624h14" stroke="#a6aab6" stroke-width="1"/><path d="M8 625h14" stroke="#f3f4f8" stroke-width="1"/><path d="M9 643c0-5 6-5 7-2s-3 5-1 6h6" fill="none" stroke="#1c2b45" stroke-width="1.300"/><path d="M14 643l7-6.500l2.500 2.500l-7 6z" fill="#f0a22e"/><rect x="8.5" y="646.5" width="3" height="3" fill="#fff" stroke="#2f62b5" stroke-width="1"/><rect x="20.5" y="646.5" width="3" height="3" fill="#fff" stroke="#2f62b5" stroke-width="1"/><path d="M9 668c0-6 4-4 6-6s3-6 8-6" fill="none" stroke="#2457a6" stroke-width="2"/><path d="M12 664l8-6.500l2 2.500l-8 6z" fill="#f0a22e"/><rect x="8.5" y="667.5" width="3" height="3" fill="#fff" stroke="#2f62b5" stroke-width="1"/><rect x="21.5" y="655.5" width="3" height="3" fill="#fff" stroke="#2f62b5" stroke-width="1"/><text x="8" y="690" font-family="Liberation Sans,sans-serif" font-size="15" font-weight="bold" fill="#2a4f9a">A</text><path d="M15 688l7-6.500l2 2.500l-7 6z" fill="#f0a22e"/></svg>
<div class="a" style="left:30px;top:608px;width:1220px;height:17px;background:#f0f0f0"></div>
<div class="a" style="left:30px;top:625px;width:1220px;height:5px;background:#c9cdd7"></div>
<svg style="left:30px;top:608px" width="260" height="16" viewBox="0 0 260 16"><rect x="1.0" y="0" width="15" height="14.500" fill="#f4f4f4" stroke="#fff" stroke-width="1"/><path d="M16.5 0v15M1.0 15h15.500" stroke="#9d9d9d" stroke-width="1" fill="none"/><rect x="16.7" y="0" width="15" height="14.500" fill="#f4f4f4" stroke="#fff" stroke-width="1"/><path d="M32.2 0v15M16.7 15h15.500" stroke="#9d9d9d" stroke-width="1" fill="none"/><rect x="32.4" y="0" width="15" height="14.500" fill="#f4f4f4" stroke="#fff" stroke-width="1"/><path d="M47.9 0v15M32.4 15h15.500" stroke="#9d9d9d" stroke-width="1" fill="none"/><rect x="48.1" y="0" width="15" height="14.500" fill="#f4f4f4" stroke="#fff" stroke-width="1"/><path d="M63.6 0v15M48.1 15h15.500" stroke="#9d9d9d" stroke-width="1" fill="none"/><g fill="#000"><path d="M5 3h1.500v9H5zM12 3v9l-5-4.500z"/><path d="M27.500 3v9l-5-4.500z"/><path d="M37 3v9l5-4.500z"/><path d="M52 3v9l5-4.500zM57.500 3H59v9h-1.500z"/></g><path d="M65 0L72 15.500H111.500L118 0z" fill="#fff" stroke="none"/><g stroke="#222" stroke-width="1.100" fill="none"><path d="M65 0.500L72 15.500"/><path d="M118 0.500L111.300 15.500"/><path d="M115.500 6L119.800 15.500H167.200L172 6.500"/><path d="M169.400 1L176 15.500H223L230.500 1"/></g></svg>
<span class="t" style="left:105.80px;top:608.40px;font-size:12px;letter-spacing:-0.532px;font-weight:bold;">Model</span>
<span class="t" style="left:156.40px;top:608.40px;font-size:12px;letter-spacing:-0.459px;">Układ1</span>
<span class="t" style="left:212.60px;top:608.40px;font-size:12px;letter-spacing:-0.359px;">Układ2</span>
<div class="a" style="left:30px;top:630px;width:1220px;height:67px;background:#d0d4df"></div>
<div class="a" style="left:31px;top:630px;width:19px;height:66px;background:#b9bdc9"></div>
<svg style="left:31px;top:630px" width="19" height="66" viewBox="0 0 19 66"><path d="M5.500 5.500l7 7M12.500 5.500l-7 7" stroke="#6c6f78" stroke-width="1.200"/><path d="M6.500 26.500h7M7.500 26v-5.500h5v5.500M10 26.500v4.500" stroke="#7b7e87" stroke-width="1" fill="none"/><path d="M11.500 21v5" stroke="#7b7e87" stroke-width="1"/></svg>
<div class="a" style="left:51px;top:630px;width:1198px;height:46px;box-sizing:border-box;background:#fff;border:1px solid #e8e8e8;border-top:2px solid #696969;border-left:2px solid #696969;border-bottom:1px solid #8a8a8a"></div>
<div class="a" style="left:51px;top:677px;width:1198px;height:19px;box-sizing:border-box;background:#fff;border:1px solid #e8e8e8;border-top:1px solid #8a8a8a;border-left:2px solid #696969"></div>
<div class="a" style="left:1231px;top:632px;width:17px;height:43px;background:#f0f0f0"></div>
<svg style="left:1231px;top:632px" width="17" height="43" viewBox="0 0 17 43"><path d="M4.500 10.500l4-4l4 4M4.500 31.500l4 4l4-4" stroke="#505050" stroke-width="1.300" fill="none"/></svg>
<span class="t" style="left:53.00px;top:631.80px;font-size:13.33px;font-family:'Liberation Mono',monospace;line-height:14px;">Command: isa_ec</span>
<span class="t" style="left:53.00px;top:645.55px;font-size:13.33px;font-family:'Liberation Mono',monospace;line-height:14px;">ISA_NOP</span>
<span class="t" style="left:53.00px;top:659.30px;font-size:13.33px;font-family:'Liberation Mono',monospace;line-height:14px;">&lt;Executor id&gt;: 9</span>
<span class="t" style="left:55.50px;top:679.50px;font-size:11.2px;font-family:'Liberation Mono',monospace;line-height:12px;font-weight:bold;color:#222;">Command:</span>
<div class="a" style="left:0;top:697px;width:1280px;height:23px;background:linear-gradient(#e2e5eb 0,#cfd3dc 2px,#c3c7d2 10px,#b6bbc8 21px)"></div>
<span class="t" style="left:5.60px;top:701.20px;font-size:12px;letter-spacing:-0.316px;color:#1e1e2e;">Dimensions selected elements on active level</span>
<span class="t" style="left:695.50px;top:701.20px;font-size:12px;letter-spacing:-0.637px;color:#1e1e2e;">1365.705,96.4063,0</span>
<span class="t" style="left:827.50px;top:701.20px;font-size:12px;letter-spacing:-0.810px;color:#1e1e2e;">OpenGL</span>
<span class="t" style="left:896.00px;top:701.20px;font-size:12px;letter-spacing:-1.227px;color:#1e1e2e;">1:1</span>
<span class="t" style="left:1115.00px;top:701.20px;font-size:12px;letter-spacing:-1.235px;color:#1e1e2e;">MODEL</span>
<span class="t" style="left:1158.00px;top:701.20px;font-size:12px;letter-spacing:-1.826px;color:#9a9ea8;">TABLET</span>
<div class="a" style="left:682px;top:699px;width:1px;height:19px;background:#8d919d;box-shadow:1px 0 0 #e3e5eb"></div>
<div class="a" style="left:690px;top:699px;width:1px;height:19px;background:#8d919d;box-shadow:1px 0 0 #e3e5eb"></div>
<div class="a" style="left:822px;top:699px;width:1px;height:19px;background:#8d919d;box-shadow:1px 0 0 #e3e5eb"></div>
<div class="a" style="left:870px;top:699px;width:1px;height:19px;background:#8d919d;box-shadow:1px 0 0 #e3e5eb"></div>
<div class="a" style="left:911px;top:699px;width:1px;height:19px;background:#8d919d;box-shadow:1px 0 0 #e3e5eb"></div>
<div class="a" style="left:935px;top:699px;width:1px;height:19px;background:#8d919d;box-shadow:1px 0 0 #e3e5eb"></div>
<div class="a" style="left:957px;top:699px;width:1px;height:19px;background:#8d919d;box-shadow:1px 0 0 #e3e5eb"></div>
<div class="a" style="left:978px;top:699px;width:1px;height:19px;background:#8d919d;box-shadow:1px 0 0 #e3e5eb"></div>
<div class="a" style="left:1000px;top:699px;width:1px;height:19px;background:#8d919d;box-shadow:1px 0 0 #e3e5eb"></div>
<div class="a" style="left:1023px;top:699px;width:1px;height:19px;background:#8d919d;box-shadow:1px 0 0 #e3e5eb"></div>
<div class="a" style="left:1045px;top:699px;width:1px;height:19px;background:#8d919d;box-shadow:1px 0 0 #e3e5eb"></div>
<div class="a" style="left:1067px;top:699px;width:1px;height:19px;background:#8d919d;box-shadow:1px 0 0 #e3e5eb"></div>
<div class="a" style="left:1089px;top:699px;width:1px;height:19px;background:#8d919d;box-shadow:1px 0 0 #e3e5eb"></div>
<div class="a" style="left:1110px;top:699px;width:1px;height:19px;background:#8d919d;box-shadow:1px 0 0 #e3e5eb"></div>
<div class="a" style="left:1153px;top:699px;width:1px;height:19px;background:#8d919d;box-shadow:1px 0 0 #e3e5eb"></div>
<div class="a" style="left:1194px;top:699px;width:1px;height:19px;background:#8d919d;box-shadow:1px 0 0 #e3e5eb"></div>
<div class="a" style="left:1218px;top:699px;width:1px;height:19px;background:#8d919d;box-shadow:1px 0 0 #e3e5eb"></div>
<div class="a" style="left:1240px;top:699px;width:1px;height:19px;background:#8d919d;box-shadow:1px 0 0 #e3e5eb"></div>
<svg style="left:0;top:697px" width="1280" height="23" viewBox="0 0 1280 23"><path d="M885 4l2.500 9l5 5l-7.500-2.500l-7.500 2.500l5-5z" fill="#fff" stroke="#222" stroke-width="1.200" stroke-linejoin="round"/><rect x="914" y="2" width="20" height="19" fill="#f1ec5a"/><path d="M922 4l2.500 9l5 5l-7.500-2.500l-7.500 2.500l5-5z" fill="#fff" stroke="#222" stroke-width="1.200" stroke-linejoin="round"/><circle cx="928" cy="12" r="3.500" fill="#fdf7b0" stroke="#7a6a10" stroke-width=".8"/><path d="M946 4l2.500 9l5 5l-7.500-2.500l-7.500 2.500l5-5z" fill="#fff" stroke="#222" stroke-width="1.200" stroke-linejoin="round"/><path d="M950 5l4 2l-3 5z" fill="#c8862a"/><rect x="960.500" y="3.500" width="16" height="16" fill="#d9dbe0" stroke="#444" stroke-width="1"/><path d="M964.500 4v15M968.500 4v15M972.500 4v15M961 7.500h15M961 11.500h15M961 15.500h15" stroke="#555" stroke-width="1"/><path d="M961 11.500h15M968.500 4v15" stroke="#e00" stroke-width="1"/><path d="M968.500 12v7" stroke="#0a0" stroke-width="1"/><rect x="966.500" y="9.500" width="4" height="4" fill="none" stroke="#e00"/><rect x="982.500" y="3.500" width="16" height="16" fill="#d9dbe0" stroke="#444" stroke-width="1"/><path d="M986.500 4v15M990.500 4v15M994.500 4v15M983 7.500h15M983 11.500h15M983 15.500h15" stroke="#555" stroke-width="1"/><rect x="1003" y="2" width="19" height="19" fill="#f1ec5a"/><path d="M1006.500 4v14.500h14" stroke="#e11" stroke-width="1.500" fill="none"/><path d="M1007 12.500h5.500v6" stroke="#1a5" stroke-width="1" fill="none"/><circle cx="1033.500" cy="11.500" r="7" fill="none" stroke="#222" stroke-width="1.400"/><path d="M1033.500 11.500h8l-3.500-6z" fill="none" stroke="#e11" stroke-width="1.200"/><path d="M1048 11.500h16M1055.500 4v15" stroke="#123" stroke-width="1.200"/><circle cx="1055.500" cy="11.500" r="1.800" fill="#e11"/><rect x="1069" y="2" width="18" height="19" fill="#f1ec5a"/><path d="M1071 18.500h14M1071 18.500l13-13" stroke="#223" stroke-width="1.600" fill="none"/><path d="M1078 11.500l5-5" stroke="#1a5" stroke-width="1"/><path d="M1092 11.500h16M1100 4v15" stroke="#111" stroke-width="1.600"/><g transform="translate(1207 11.500)" fill="#1d6fd0"><circle r="5.500"/><g stroke="#1d6fd0" stroke-width="3"><path d="M0 -8v16M-8 0h16M-5.700 -5.700l11.400 11.400M5.700 -5.700l-11.400 11.400"/></g><circle r="2.300" fill="#c3c7d2"/></g><rect x="1222.500" y="5.500" width="9" height="7" fill="#fff" stroke="#1b3a6b" stroke-width="1.400"/><rect x="1226.500" y="10.500" width="9" height="7" fill="#fff" stroke="#1b3a6b" stroke-width="1.400"/><circle cx="1251" cy="11.500" r="8" fill="#3daa3d" stroke="#8fd08f" stroke-width="1"/><path d="M1246.500 11.500l3.500 3.500l6-7" stroke="#fff" stroke-width="2.200" fill="none"/><g fill="#8d919d"><rect x="1272" y="17" width="2" height="2"/><rect x="1268" y="17" width="2" height="2"/><rect x="1272" y="13" width="2" height="2"/><rect x="1264" y="17" width="2" height="2"/><rect x="1268" y="13" width="2" height="2"/><rect x="1272" y="9" width="2" height="2"/></g></svg>
<div class="a" style="left:853px;top:122px;width:222px;height:355px;box-sizing:border-box;background:#fafafa;border:1px solid #9b9b9b;box-shadow:1px 1px 0 rgba(0,0,0,.25)"></div>
<span class="t" style="left:897.30px;top:138.60px;font-size:12px;letter-spacing:-0.230px;color:#000;">Dimensions of selected objects</span>
<span class="t" style="left:897.30px;top:182.60px;font-size:12px;letter-spacing:-0.243px;color:#000;">Dimension</span>
<span class="t" style="left:897.30px;top:226.60px;font-size:12px;letter-spacing:-0.117px;color:#000;">Angular dimension</span>
<span class="t" style="left:897.30px;top:270.60px;font-size:12px;letter-spacing:-0.087px;color:#000;">Dimension entire drawing</span>
<span class="t" style="left:897.30px;top:314.60px;font-size:12px;letter-spacing:-0.219px;color:#000;">Dimension radius</span>
<span class="t" style="left:897.30px;top:358.60px;font-size:12px;letter-spacing:-0.180px;color:#000;">Dimension angularly objects</span>
<span class="t" style="left:897.30px;top:402.60px;font-size:12px;letter-spacing:-0.028px;color:#000;">Spot height</span>
<span class="t" style="left:897.30px;top:446.60px;font-size:12px;letter-spacing:-0.164px;color:#000;">Object label</span>
<svg style="left:0;top:0" width="1280" height="480" viewBox="0 0 1280 480"><g><path d="M865 142.5h22" stroke="#2b5cab" stroke-width="1"/><path d="M864 142.5l3-2.500v5zM888 142.5l-3-2.500v5z" fill="#2b5cab"/><text x="871" y="140" font-family="Liberation Sans,sans-serif" font-size="6" font-weight="bold" fill="#2b5cab">100</text><rect x="865" y="147" width="22" height="6" fill="url(#hat3)"/><path d="M865 147.5h22M865 153.5h22" stroke="#2a2e36" stroke-width="1"/></g><g><path d="M865 184.5h22" stroke="#2b5cab" stroke-width="1"/><path d="M864 184.5l3-2.500v5zM888 184.5l-3-2.500v5z" fill="#2b5cab"/><text x="871" y="182" font-family="Liberation Sans,sans-serif" font-size="6" font-weight="bold" fill="#2b5cab">100</text><rect x="865" y="189" width="22" height="9" fill="url(#hat3)"/><path d="M865 189.5h22M865 198.5h22" stroke="#2a2e36" stroke-width="1"/></g><path d="M863.500 229.500L876 243L888.500 229.500" fill="none" stroke="#333" stroke-width="1"/><path d="M864 229.500C872 225.500 880 225.500 888 229.500" fill="none" stroke="#333" stroke-width="1"/><path d="M863.500 229.500l3.500-3M863.500 229.500l4.500 1.500M888.500 229.500l-3.500-3M888.500 229.500l-4.500 1.500" stroke="#333" stroke-width="1" fill="none"/><path d="M874.500 230.500h3M876 229v3" stroke="#2b5cab" stroke-width="1"/><path d="M870 269.500h16M872 273.500h14M866.500 276v12" stroke="#2b5cab" stroke-width="1" fill="none"/><path d="M869.500 267v5M886.500 267v9" stroke="#2b5cab" stroke-width="1"/><path d="M864.500 278.500l2-2.500l2 2.500zM864.500 285.500l2 2.500l2-2.500z" fill="#2b5cab"/><path d="M875 277h11v11h-16v-6h5z" fill="url(#chk)"/><path d="M873 313.500a8.500 8.500 0 0 1 9 15" fill="none" stroke="#666" stroke-width="1"/><path d="M869.500 328.500L880.500 317.500M880.500 317.500h-4M880.500 317.500v4" stroke="#333" stroke-width="1" fill="none"/><path d="M868 329.500h3M869.500 328v3" stroke="#2b5cab" stroke-width="1"/><path d="M864 367l8 8h8l8-8" fill="none" stroke="#e9a820" stroke-width="2.600"/><path d="M864 366l8 8h8l8-8" fill="none" stroke="#2b4f8f" stroke-width="1"/><path d="M866 364.500C871 358.500 881 358.500 886 364.500" fill="none" stroke="#222" stroke-width="1.300"/><path d="M862.500 361.500l3.500 3.500l-.5-4.500M889.500 361.500l-3.500 3.500l.5-4.500" stroke="#222" stroke-width="1.200" fill="none"/><path d="M867 410.500h18M874.500 400v18" stroke="#444" stroke-width="1"/><path d="M867 411h7.500v7z" fill="#333"/><path d="M869 405.500h3" stroke="#2b5cab" stroke-width="1"/><text x="877" y="408" font-family="Liberation Sans,sans-serif" font-size="6" font-weight="bold" fill="#2b5cab">10</text><circle cx="875.500" cy="452" r="7.500" fill="#f4f4f4" stroke="#8a8a8a" stroke-width="1"/><path d="M875.500 459.500v5" stroke="#555" stroke-width="1"/><text x="871.700" y="456" font-family="Liberation Sans,sans-serif" font-size="10" font-weight="bold" fill="#3a62ad">A</text></svg>
</body></html>
